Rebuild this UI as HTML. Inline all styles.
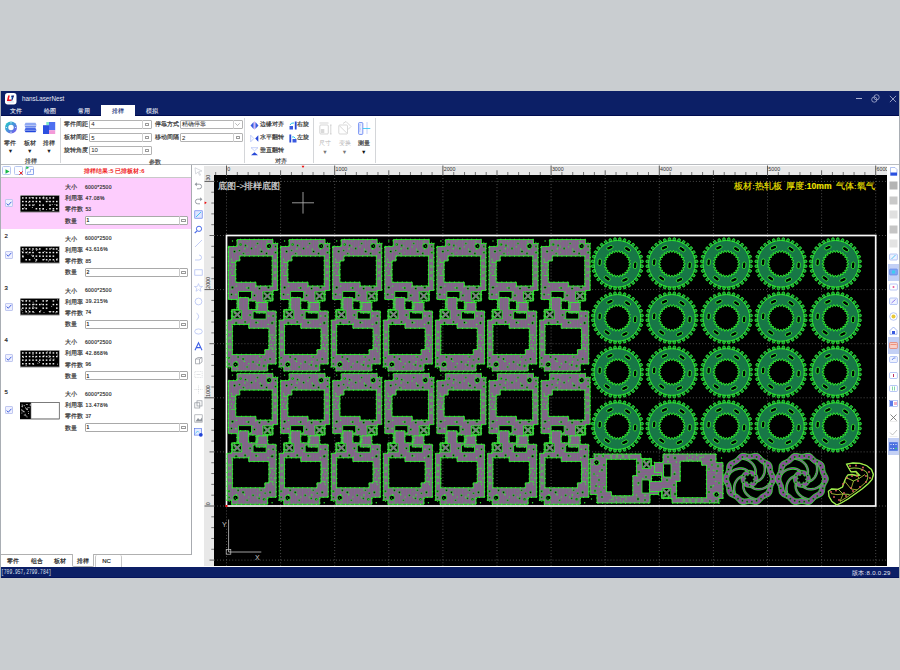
<!DOCTYPE html><html><head><meta charset="utf-8"><style>
*{margin:0;padding:0;box-sizing:border-box}
html,body{width:900px;height:670px;overflow:hidden;background:#c9cdd0;font-family:"Liberation Sans",sans-serif;position:relative}
.a{position:absolute}
.t{position:absolute;white-space:nowrap;line-height:1}
svg{position:absolute;overflow:visible}
</style></head><body>

<div class="a" style="left:0px;top:91px;width:900px;height:487.3px;background:#fff;border-left:1px solid #a9aeb4;border-right:1px solid #a9aeb4"></div>
<div class="a" style="left:1px;top:91px;width:898px;height:25px;background:#0c1f66;border-bottom:1px solid #000c50"></div>
<svg style="left:5px;top:92.8px" width="11.5" height="11.5" viewBox="0 0 11 11">
<rect x="0" y="0" width="11" height="11" rx="2.6" fill="#fff"/>
<path d="M3 2.4 L4.6 2.4 L3.7 6.2 L6.4 6.2 L6 7.6 L1.8 7.6 Z" fill="#ee1122"/>
<path d="M6.2 2.4 L8.8 2.4 L7 7.2 L5.9 7.2 L7 4 L5.8 4 Z" fill="#132a80"/>
<path d="M5.6 4.2 L6.8 4.2 L6.2 6 Z" fill="#3aaef0"/>
<path d="M2.2 8.6 H8.6" stroke="#7aa8e0" stroke-width="0.4"/>
</svg>
<div class="t" style="left:22px;top:95.95px;font-size:6.3px;color:#e6e9f2;">hansLaserNest</div>
<div class="a" style="left:856.2px;top:98.2px;width:5.6px;height:0.8px;background:#a9afd0"></div>
<svg style="left:871px;top:94px" width="9" height="9" viewBox="0 0 9 9" fill="none" stroke="#b4b9d8" stroke-width="0.75">
<circle cx="3.3" cy="5.6" r="2.6"/><circle cx="5.6" cy="3.3" r="2.6"/></svg>
<svg style="left:888.5px;top:94.5px" width="8" height="8" viewBox="0 0 9 9" stroke="#c9cde6" stroke-width="0.8">
<path d="M1 1 L8 8 M8 1 L1 8"/></svg>
<div class="a" style="left:101px;top:105px;width:34px;height:11px;background:#fff"></div>
<div class="t" style="left:-33.6px;width:100px;text-align:center;top:108.00px;font-size:6px;color:#e8ebf5;;-webkit-text-stroke:0.12px #e8ebf5">文件</div>
<div class="t" style="left:0.3999999999999986px;width:100px;text-align:center;top:108.00px;font-size:6px;color:#e8ebf5;;-webkit-text-stroke:0.12px #e8ebf5">绘图</div>
<div class="t" style="left:34px;width:100px;text-align:center;top:108.00px;font-size:6px;color:#e8ebf5;;-webkit-text-stroke:0.12px #e8ebf5">常用</div>
<div class="t" style="left:67.8px;width:100px;text-align:center;top:108.00px;font-size:6px;color:#1a2f78;;-webkit-text-stroke:0.12px #1a2f78">排样</div>
<div class="t" style="left:101.6px;width:100px;text-align:center;top:108.00px;font-size:6px;color:#e8ebf5;;-webkit-text-stroke:0.12px #e8ebf5">模拟</div>
<div class="a" style="left:1px;top:164px;width:898px;height:1.3px;background:#b9bcc0"></div>
<div class="a" style="left:59.5px;top:118px;width:1px;height:45px;background:#d4d6d9"></div>
<div class="a" style="left:243.5px;top:118px;width:1px;height:45px;background:#d4d6d9"></div>
<div class="a" style="left:312.5px;top:118px;width:1px;height:45px;background:#d4d6d9"></div>
<div class="a" style="left:374.5px;top:118px;width:1px;height:45px;background:#d4d6d9"></div>
<svg style="left:4px;top:121px" width="14" height="14" viewBox="0 0 14 14">
<defs><linearGradient id="g1" x1="0" y1="0" x2="1" y2="1"><stop offset="0" stop-color="#19d3c5"/><stop offset="1" stop-color="#7b4cf0"/></linearGradient></defs>
<circle cx="7" cy="6.5" r="6" fill="url(#g1)"/><circle cx="7" cy="6.5" r="2.7" fill="#fff"/>
<circle cx="7" cy="1.8" r="0.6" fill="#fff"/><circle cx="7" cy="11.2" r="0.6" fill="#fff"/><circle cx="2.3" cy="6.5" r="0.6" fill="#fff"/><circle cx="11.7" cy="6.5" r="0.6" fill="#fff"/>
</svg>
<svg style="left:23.5px;top:122px" width="13" height="11" viewBox="0 0 13 11">
<path d="M1.5 0.8 H11.5 L12.5 3 H0.5 Z" fill="#8fa8f2"/>
<path d="M0.5 3.5 H12.5 L11.5 5.8 H1.5 Z" fill="#6f8cec"/>
<path d="M1.5 6 H11.5 L12.5 8.2 H0.5 Z" fill="#4a6ae6"/>
<path d="M0.5 8.6 H12.5 L11.5 10.3 H1.5 Z" fill="#1f45dc"/>
</svg>
<svg style="left:43px;top:122px" width="13" height="12" viewBox="0 0 13 12">
<rect x="3.3" y="0" width="2.7" height="3.2" fill="#7de8c8"/>
<rect x="6" y="0" width="6.2" height="8.2" fill="#4e6ff0"/>
<rect x="0" y="3.2" width="6" height="8.8" fill="#2c4fdf"/>
<rect x="6" y="8.2" width="6.2" height="3.8" fill="#f39ad8"/>
</svg>
<div class="t" style="left:-39.6px;width:100px;text-align:center;top:139.60px;font-size:6px;color:#333;;-webkit-text-stroke:0.18px #333">零件</div>
<div class="t" style="left:-39.6px;width:100px;text-align:center;top:149.45px;font-size:5.5px;color:#222;">▼</div>
<div class="t" style="left:-20.4px;width:100px;text-align:center;top:139.60px;font-size:6px;color:#333;;-webkit-text-stroke:0.18px #333">板材</div>
<div class="t" style="left:-20.4px;width:100px;text-align:center;top:149.45px;font-size:5.5px;color:#222;">▼</div>
<div class="t" style="left:-1px;width:100px;text-align:center;top:139.60px;font-size:6px;color:#333;;-webkit-text-stroke:0.18px #333">排样</div>
<div class="t" style="left:-1px;width:100px;text-align:center;top:149.45px;font-size:5.5px;color:#222;">▼</div>
<div class="t" style="left:-19px;width:100px;text-align:center;top:158.20px;font-size:6px;color:#444;;-webkit-text-stroke:0.18px #444">排样</div>
<div class="t" style="left:104.69999999999999px;width:100px;text-align:center;top:158.50px;font-size:6px;color:#444;;-webkit-text-stroke:0.18px #444">参数</div>
<div class="t" style="left:231.3px;width:100px;text-align:center;top:158.20px;font-size:6px;color:#444;;-webkit-text-stroke:0.18px #444">对齐</div>
<div class="t" style="left:63.8px;top:121.75px;font-size:5.7px;color:#333;;-webkit-text-stroke:0.18px #333">零件间距</div>
<div class="a" style="left:89.2px;top:119.5px;width:63px;height:9px;background:#fff;border:1px solid #b3b3b3;border-radius:1px"></div>
<div class="t" style="left:91.2px;top:121.20px;font-size:6px;color:#222;">4</div>
<div class="a" style="left:142.2px;top:119.5px;width:1px;height:9px;background:#cfcfcf"></div>
<div class="a" style="left:145.2px;top:122.5px;width:4px;height:3px;border:0.6px solid #9a9a9a;border-radius:0.5px"></div>
<div class="t" style="left:63.8px;top:135.05px;font-size:5.7px;color:#333;;-webkit-text-stroke:0.18px #333">板材间距</div>
<div class="a" style="left:89.2px;top:132.8px;width:63px;height:9px;background:#fff;border:1px solid #b3b3b3;border-radius:1px"></div>
<div class="t" style="left:91.2px;top:134.50px;font-size:6px;color:#222;">5</div>
<div class="a" style="left:142.2px;top:132.8px;width:1px;height:9px;background:#cfcfcf"></div>
<div class="a" style="left:145.2px;top:135.8px;width:4px;height:3px;border:0.6px solid #9a9a9a;border-radius:0.5px"></div>
<div class="t" style="left:63.8px;top:147.95px;font-size:5.7px;color:#333;;-webkit-text-stroke:0.18px #333">旋转角度</div>
<div class="a" style="left:89.2px;top:145.7px;width:63px;height:9px;background:#fff;border:1px solid #b3b3b3;border-radius:1px"></div>
<div class="t" style="left:91.2px;top:147.40px;font-size:6px;color:#222;">10</div>
<div class="a" style="left:142.2px;top:145.7px;width:1px;height:9px;background:#cfcfcf"></div>
<div class="a" style="left:145.2px;top:148.7px;width:4px;height:3px;border:0.6px solid #9a9a9a;border-radius:0.5px"></div>
<div class="t" style="left:154.7px;top:121.75px;font-size:5.7px;color:#333;;-webkit-text-stroke:0.18px #333">停靠方式</div>
<div class="a" style="left:180px;top:119.5px;width:62.5px;height:9px;background:#fff;border:1px solid #b3b3b3;border-radius:1px"></div>
<div class="t" style="left:182px;top:121.20px;font-size:6px;color:#222;">精确停靠</div>
<div class="a" style="left:232.5px;top:119.5px;width:1px;height:9px;background:#cfcfcf"></div>
<svg style="left:235.0px;top:122.5px" width="5" height="3" viewBox="0 0 5 3"><path d="M0.3 0.3 L2.5 2.5 L4.7 0.3" fill="none" stroke="#888" stroke-width="0.6"/></svg>
<div class="t" style="left:154.7px;top:135.05px;font-size:5.7px;color:#333;;-webkit-text-stroke:0.18px #333">移动间隔</div>
<div class="a" style="left:180px;top:132.8px;width:62.5px;height:9px;background:#fff;border:1px solid #b3b3b3;border-radius:1px"></div>
<div class="t" style="left:182px;top:134.50px;font-size:6px;color:#222;">2</div>
<div class="a" style="left:232.5px;top:132.8px;width:1px;height:9px;background:#cfcfcf"></div>
<div class="a" style="left:235.5px;top:135.8px;width:4px;height:3px;border:0.6px solid #9a9a9a;border-radius:0.5px"></div>
<svg style="left:250px;top:120.5px" width="9" height="9" viewBox="0 0 9 9">
<path d="M3.6 1 L0.5 4.5 L3.6 8 Z" fill="#3b5be0"/><path d="M5.4 1 L8.5 4.5 L5.4 8 Z" fill="#3b5be0"/>
<rect x="4.2" y="0.5" width="0.6" height="8" fill="#c080f0"/></svg>
<div class="t" style="left:260px;top:121.85px;font-size:5.7px;color:#333;;-webkit-text-stroke:0.18px #333">边缘对齐</div>
<svg style="left:250px;top:134px" width="9" height="9" viewBox="0 0 9 9">
<path d="M0.7 1.2 L3.8 4.5 L0.7 7.8 Z" fill="none" stroke="#9fb3f5" stroke-width="0.6"/><path d="M8.3 1.2 L5.2 4.5 L8.3 7.8 Z" fill="#2849d8"/></svg>
<div class="t" style="left:260px;top:135.15px;font-size:5.7px;color:#333;;-webkit-text-stroke:0.18px #333">水平翻转</div>
<svg style="left:250px;top:147px" width="9" height="9" viewBox="0 0 9 9">
<path d="M1 0.7 L8 0.7 L4.5 3.8 Z" fill="none" stroke="#9fb3f5" stroke-width="0.6"/><path d="M1 8.3 L8 8.3 L4.5 5.2 Z" fill="#2849d8"/></svg>
<div class="t" style="left:260px;top:148.05px;font-size:5.7px;color:#333;;-webkit-text-stroke:0.18px #333">垂直翻转</div>
<svg style="left:288.5px;top:120.5px" width="8" height="9" viewBox="0 0 8 9">
<rect x="5.8" y="0.5" width="1.8" height="8" fill="#2849d8"/><path d="M0.5 8.5 L0.5 5 L4 5 L4 8.5 Z" fill="#3a5ae0"/><path d="M1 4 Q2 1.5 5 2" fill="none" stroke="#27c6f0" stroke-width="1"/></svg>
<div class="t" style="left:297.2px;top:121.85px;font-size:5.7px;color:#333;;-webkit-text-stroke:0.18px #333">右旋</div>
<svg style="left:288.5px;top:133.5px" width="8" height="9" viewBox="0 0 8 9">
<rect x="0.4" y="0.5" width="1.8" height="8" fill="#2849d8"/><path d="M3.5 8.5 L3.5 5 L7.5 5 L7.5 8.5 Z" fill="#3a5ae0"/><path d="M3 3 Q5 2 6.5 4.5" fill="none" stroke="#27c6f0" stroke-width="1"/></svg>
<div class="t" style="left:297.2px;top:135.15px;font-size:5.7px;color:#333;;-webkit-text-stroke:0.18px #333">左旋</div>
<svg style="left:318.5px;top:121.5px" width="13" height="13" viewBox="0 0 13 13" fill="none" stroke="#c4c4c4" stroke-width="0.7">
<path d="M0.5 1 H9.5"/><rect x="0.8" y="3" width="8.5" height="9" rx="1"/><rect x="1.8" y="7" width="3.5" height="4" fill="#dadada" stroke="none"/><path d="M11.8 3 V12 M11 3 H12.6 M11 12 H12.6"/></svg>
<svg style="left:338px;top:120.5px" width="14" height="14" viewBox="0 0 14 14" fill="none" stroke="#c8c8c8" stroke-width="0.7">
<rect x="0.8" y="4" width="8.7" height="9" rx="1"/><path d="M1.5 4.8 L9 12.3"/><path d="M5 2.5 L8 0.5 L13 5.5 L10 8.5"/></svg>
<svg style="left:358px;top:121.5px" width="13" height="13" viewBox="0 0 13 13">
<rect x="0.6" y="0.6" width="4.2" height="11.8" rx="0.8" fill="#eef2ff" stroke="#5878f0" stroke-width="0.8"/>
<path d="M1.2 3 H3 M1.2 5 H2.4 M1.2 7 H3 M1.2 9 H2.4" stroke="#5878f0" stroke-width="0.5"/>
<path d="M9 0.5 V12.5" stroke="#5878f0" stroke-width="0.7" stroke-dasharray="1 1"/>
<path d="M4.8 6.5 H12.3" stroke="#3ccaf0" stroke-width="0.9"/></svg>
<div class="t" style="left:275px;width:100px;text-align:center;top:139.90px;font-size:6px;color:#b5b5b5;">尺寸</div>
<div class="t" style="left:275px;width:100px;text-align:center;top:149.55px;font-size:5.5px;color:#777;">▼</div>
<div class="t" style="left:294.5px;width:100px;text-align:center;top:139.90px;font-size:6px;color:#b5b5b5;">变换</div>
<div class="t" style="left:294.5px;width:100px;text-align:center;top:149.55px;font-size:5.5px;color:#777;">▼</div>
<div class="t" style="left:313.8px;width:100px;text-align:center;top:139.90px;font-size:6px;color:#333;;-webkit-text-stroke:0.18px #333">测量</div>
<div class="t" style="left:313.8px;width:100px;text-align:center;top:149.55px;font-size:5.5px;color:#111;">▼</div>
<div class="a" style="left:191px;top:165px;width:1px;height:390px;background:#a8abb0"></div>
<div class="a" style="left:1px;top:176.6px;width:190px;height:0.8px;background:#c9c9c9"></div>
<div class="a" style="left:2px;top:166.4px;width:9px;height:9px;border:0.7px solid #b8c8f0;border-radius:1.5px;background:#fbfcff"></div>
<div class="a" style="left:13.5px;top:166.4px;width:9px;height:9px;border:0.7px solid #b8c8f0;border-radius:1.5px;background:#fbfcff"></div>
<div class="a" style="left:25px;top:166.4px;width:9px;height:9px;border:0.7px solid #b8c8f0;border-radius:1.5px;background:#fbfcff"></div>
<svg style="left:4.5px;top:168.8px" width="5" height="5" viewBox="0 0 5 5"><path d="M0.5 0.3 L4.6 2.5 L0.5 4.7 Z" fill="#18b848"/></svg>
<svg style="left:18.8px;top:171.2px" width="4" height="4" viewBox="0 0 4 4"><path d="M0.3 0.3 L3.7 3.7 M3.7 0.3 L0.3 3.7" stroke="#e81818" stroke-width="0.9"/></svg>
<svg style="left:26px;top:166px" width="3.5" height="3.5" viewBox="0 0 4 4"><path d="M0.3 0.3 L3.7 2 L0.3 3.7 Z" fill="#18b848"/></svg>
<svg style="left:26.5px;top:168.5px" width="7" height="6" viewBox="0 0 7 6" fill="none" stroke="#6d8fe8" stroke-width="0.6"><path d="M0.5 5.5 V3 H3.5 V0.5 H6.5 V5.5 Z"/></svg>
<div class="t" style="left:84px;top:168.70px;font-size:5.8px;color:#f01c1c;font-weight:bold;letter-spacing:0.05px">排样结果:5 已排板材:6</div>
<div class="a" style="left:1px;top:177.5px;width:190px;height:51.5px;background:#fdcdfd"></div>
<div class="a" style="left:5px;top:199.0px;width:8px;height:8px;background:#eef0ff;border:0.7px solid #c0c8f0;border-radius:1px"></div>
<svg style="left:6px;top:200.5px" width="6" height="5" viewBox="0 0 6 5"><path d="M0.6 2.6 L2.3 4.2 L5.4 0.8" fill="none" stroke="#3050d8" stroke-width="0.9"/></svg>
<div class="t" style="left:65px;top:184.00px;font-size:6px;color:#333;;-webkit-text-stroke:0.18px #333">大小</div>
<div class="t" style="left:85px;top:184.50px;font-size:5px;color:#333;letter-spacing:0.28px;-webkit-text-stroke:0.18px #333">6000*2500</div>
<div class="t" style="left:65px;top:195.20px;font-size:6px;color:#333;;-webkit-text-stroke:0.18px #333">利用率</div>
<div class="t" style="left:85.5px;top:195.70px;font-size:5px;color:#333;letter-spacing:0.4px;-webkit-text-stroke:0.18px #333">47.08%</div>
<div class="t" style="left:65px;top:206.30px;font-size:6px;color:#333;;-webkit-text-stroke:0.18px #333">零件数</div>
<div class="t" style="left:85.5px;top:206.80px;font-size:5px;color:#333;;-webkit-text-stroke:0.18px #333">53</div>
<div class="t" style="left:65px;top:217.70px;font-size:6px;color:#333;;-webkit-text-stroke:0.18px #333">数量</div>
<div class="a" style="left:84.5px;top:216.1px;width:103.5px;height:9px;background:#fff;border:0.8px solid #a9a9a9;border-radius:1px"></div>
<div class="t" style="left:86.5px;top:218.30px;font-size:5px;color:#222;;-webkit-text-stroke:0.18px #222">1</div>
<div class="a" style="left:178.5px;top:216.1px;width:0.8px;height:9px;background:#c8c8c8"></div>
<div class="a" style="left:181px;top:219.0px;width:4.5px;height:3.2px;border:0.6px solid #999;border-radius:0.5px"></div>
<div class="t" style="left:4.5px;top:233.45px;font-size:6px;color:#222;;-webkit-text-stroke:0.18px #222">2</div>
<div class="a" style="left:5px;top:250.75px;width:8px;height:8px;background:#eef0ff;border:0.7px solid #c0c8f0;border-radius:1px"></div>
<svg style="left:6px;top:252.25px" width="6" height="5" viewBox="0 0 6 5"><path d="M0.6 2.6 L2.3 4.2 L5.4 0.8" fill="none" stroke="#3050d8" stroke-width="0.9"/></svg>
<div class="t" style="left:65px;top:235.75px;font-size:6px;color:#333;;-webkit-text-stroke:0.18px #333">大小</div>
<div class="t" style="left:85px;top:236.25px;font-size:5px;color:#333;letter-spacing:0.28px;-webkit-text-stroke:0.18px #333">6000*2500</div>
<div class="t" style="left:65px;top:246.95px;font-size:6px;color:#333;;-webkit-text-stroke:0.18px #333">利用率</div>
<div class="t" style="left:85.5px;top:247.45px;font-size:5px;color:#333;letter-spacing:0.4px;-webkit-text-stroke:0.18px #333">43.616%</div>
<div class="t" style="left:65px;top:258.05px;font-size:6px;color:#333;;-webkit-text-stroke:0.18px #333">零件数</div>
<div class="t" style="left:85.5px;top:258.55px;font-size:5px;color:#333;;-webkit-text-stroke:0.18px #333">85</div>
<div class="t" style="left:65px;top:269.45px;font-size:6px;color:#333;;-webkit-text-stroke:0.18px #333">数量</div>
<div class="a" style="left:84.5px;top:267.85px;width:103.5px;height:9px;background:#fff;border:0.8px solid #a9a9a9;border-radius:1px"></div>
<div class="t" style="left:86.5px;top:270.05px;font-size:5px;color:#222;;-webkit-text-stroke:0.18px #222">2</div>
<div class="a" style="left:178.5px;top:267.85px;width:0.8px;height:9px;background:#c8c8c8"></div>
<div class="a" style="left:181px;top:270.75px;width:4.5px;height:3.2px;border:0.6px solid #999;border-radius:0.5px"></div>
<div class="t" style="left:4.5px;top:285.20px;font-size:6px;color:#222;;-webkit-text-stroke:0.18px #222">3</div>
<div class="a" style="left:5px;top:302.5px;width:8px;height:8px;background:#eef0ff;border:0.7px solid #c0c8f0;border-radius:1px"></div>
<svg style="left:6px;top:304.0px" width="6" height="5" viewBox="0 0 6 5"><path d="M0.6 2.6 L2.3 4.2 L5.4 0.8" fill="none" stroke="#3050d8" stroke-width="0.9"/></svg>
<div class="t" style="left:65px;top:287.50px;font-size:6px;color:#333;;-webkit-text-stroke:0.18px #333">大小</div>
<div class="t" style="left:85px;top:288.00px;font-size:5px;color:#333;letter-spacing:0.28px;-webkit-text-stroke:0.18px #333">6000*2500</div>
<div class="t" style="left:65px;top:298.70px;font-size:6px;color:#333;;-webkit-text-stroke:0.18px #333">利用率</div>
<div class="t" style="left:85.5px;top:299.20px;font-size:5px;color:#333;letter-spacing:0.4px;-webkit-text-stroke:0.18px #333">39.215%</div>
<div class="t" style="left:65px;top:309.80px;font-size:6px;color:#333;;-webkit-text-stroke:0.18px #333">零件数</div>
<div class="t" style="left:85.5px;top:310.30px;font-size:5px;color:#333;;-webkit-text-stroke:0.18px #333">74</div>
<div class="t" style="left:65px;top:321.20px;font-size:6px;color:#333;;-webkit-text-stroke:0.18px #333">数量</div>
<div class="a" style="left:84.5px;top:319.6px;width:103.5px;height:9px;background:#fff;border:0.8px solid #a9a9a9;border-radius:1px"></div>
<div class="t" style="left:86.5px;top:321.80px;font-size:5px;color:#222;;-webkit-text-stroke:0.18px #222">1</div>
<div class="a" style="left:178.5px;top:319.6px;width:0.8px;height:9px;background:#c8c8c8"></div>
<div class="a" style="left:181px;top:322.5px;width:4.5px;height:3.2px;border:0.6px solid #999;border-radius:0.5px"></div>
<div class="t" style="left:4.5px;top:336.95px;font-size:6px;color:#222;;-webkit-text-stroke:0.18px #222">4</div>
<div class="a" style="left:5px;top:354.25px;width:8px;height:8px;background:#eef0ff;border:0.7px solid #c0c8f0;border-radius:1px"></div>
<svg style="left:6px;top:355.75px" width="6" height="5" viewBox="0 0 6 5"><path d="M0.6 2.6 L2.3 4.2 L5.4 0.8" fill="none" stroke="#3050d8" stroke-width="0.9"/></svg>
<div class="t" style="left:65px;top:339.25px;font-size:6px;color:#333;;-webkit-text-stroke:0.18px #333">大小</div>
<div class="t" style="left:85px;top:339.75px;font-size:5px;color:#333;letter-spacing:0.28px;-webkit-text-stroke:0.18px #333">6000*2500</div>
<div class="t" style="left:65px;top:350.45px;font-size:6px;color:#333;;-webkit-text-stroke:0.18px #333">利用率</div>
<div class="t" style="left:85.5px;top:350.95px;font-size:5px;color:#333;letter-spacing:0.4px;-webkit-text-stroke:0.18px #333">42.868%</div>
<div class="t" style="left:65px;top:361.55px;font-size:6px;color:#333;;-webkit-text-stroke:0.18px #333">零件数</div>
<div class="t" style="left:85.5px;top:362.05px;font-size:5px;color:#333;;-webkit-text-stroke:0.18px #333">96</div>
<div class="t" style="left:65px;top:372.95px;font-size:6px;color:#333;;-webkit-text-stroke:0.18px #333">数量</div>
<div class="a" style="left:84.5px;top:371.35px;width:103.5px;height:9px;background:#fff;border:0.8px solid #a9a9a9;border-radius:1px"></div>
<div class="t" style="left:86.5px;top:373.55px;font-size:5px;color:#222;;-webkit-text-stroke:0.18px #222">1</div>
<div class="a" style="left:178.5px;top:371.35px;width:0.8px;height:9px;background:#c8c8c8"></div>
<div class="a" style="left:181px;top:374.25px;width:4.5px;height:3.2px;border:0.6px solid #999;border-radius:0.5px"></div>
<div class="t" style="left:4.5px;top:388.70px;font-size:6px;color:#222;;-webkit-text-stroke:0.18px #222">5</div>
<div class="a" style="left:5px;top:406.0px;width:8px;height:8px;background:#eef0ff;border:0.7px solid #c0c8f0;border-radius:1px"></div>
<svg style="left:6px;top:407.5px" width="6" height="5" viewBox="0 0 6 5"><path d="M0.6 2.6 L2.3 4.2 L5.4 0.8" fill="none" stroke="#3050d8" stroke-width="0.9"/></svg>
<div class="t" style="left:65px;top:391.00px;font-size:6px;color:#333;;-webkit-text-stroke:0.18px #333">大小</div>
<div class="t" style="left:85px;top:391.50px;font-size:5px;color:#333;letter-spacing:0.28px;-webkit-text-stroke:0.18px #333">6000*2500</div>
<div class="t" style="left:65px;top:402.20px;font-size:6px;color:#333;;-webkit-text-stroke:0.18px #333">利用率</div>
<div class="t" style="left:85.5px;top:402.70px;font-size:5px;color:#333;letter-spacing:0.4px;-webkit-text-stroke:0.18px #333">13.478%</div>
<div class="t" style="left:65px;top:413.30px;font-size:6px;color:#333;;-webkit-text-stroke:0.18px #333">零件数</div>
<div class="t" style="left:85.5px;top:413.80px;font-size:5px;color:#333;;-webkit-text-stroke:0.18px #333">37</div>
<div class="t" style="left:65px;top:424.70px;font-size:6px;color:#333;;-webkit-text-stroke:0.18px #333">数量</div>
<div class="a" style="left:84.5px;top:423.1px;width:103.5px;height:9px;background:#fff;border:0.8px solid #a9a9a9;border-radius:1px"></div>
<div class="t" style="left:86.5px;top:425.30px;font-size:5px;color:#222;;-webkit-text-stroke:0.18px #222">1</div>
<div class="a" style="left:178.5px;top:423.1px;width:0.8px;height:9px;background:#c8c8c8"></div>
<div class="a" style="left:181px;top:426.0px;width:4.5px;height:3.2px;border:0.6px solid #999;border-radius:0.5px"></div>
<svg style="left:20px;top:194.5px" width="39.5" height="17.5" viewBox="0 0 39.5 17"><rect x="0" y="0" width="39.5" height="17" fill="#000"/><rect x="2.0" y="2.0" width="1.6" height="1.4" fill="#f0f0f0"/><rect x="5.4" y="2.0" width="1.6" height="1.4" fill="#f0f0f0"/><rect x="8.8" y="2.0" width="1.6" height="1.4" fill="#f0f0f0"/><rect x="12.2" y="2.0" width="1.6" height="1.4" fill="#f0f0f0"/><rect x="15.6" y="2.0" width="1.6" height="1.4" fill="#f0f0f0"/><rect x="19.0" y="2.0" width="1.6" height="1.4" fill="#f0f0f0"/><rect x="22.4" y="2.0" width="1.6" height="1.4" fill="#f0f0f0"/><rect x="25.8" y="2.0" width="1.6" height="1.4" fill="#f0f0f0"/><rect x="29.2" y="2.0" width="1.6" height="1.4" fill="#f0f0f0"/><rect x="32.6" y="2.0" width="1.6" height="1.4" fill="#f0f0f0"/><rect x="2.0" y="5.6" width="1.6" height="1.4" fill="#f0f0f0"/><rect x="5.4" y="5.6" width="1.6" height="1.4" fill="#f0f0f0"/><rect x="8.8" y="5.6" width="1.6" height="1.4" fill="#f0f0f0"/><rect x="12.2" y="5.6" width="1.6" height="1.4" fill="#f0f0f0"/><rect x="15.6" y="5.6" width="1.6" height="1.4" fill="#f0f0f0"/><rect x="19.0" y="5.6" width="1.6" height="1.4" fill="#f0f0f0"/><rect x="25.8" y="5.6" width="1.6" height="1.4" fill="#f0f0f0"/><rect x="29.2" y="5.6" width="1.6" height="1.4" fill="#f0f0f0"/><rect x="32.6" y="5.6" width="1.6" height="1.4" fill="#f0f0f0"/><rect x="36.0" y="5.6" width="1.6" height="1.4" fill="#f0f0f0"/><rect x="2.0" y="9.2" width="1.6" height="1.4" fill="#f0f0f0"/><rect x="5.4" y="9.2" width="1.6" height="1.4" fill="#f0f0f0"/><rect x="8.8" y="9.2" width="1.6" height="1.4" fill="#f0f0f0"/><rect x="12.2" y="9.2" width="1.6" height="1.4" fill="#f0f0f0"/><rect x="19.0" y="9.2" width="1.6" height="1.4" fill="#f0f0f0"/><rect x="22.4" y="9.2" width="1.6" height="1.4" fill="#f0f0f0"/><rect x="29.2" y="9.2" width="1.6" height="1.4" fill="#f0f0f0"/><rect x="36.0" y="9.2" width="1.6" height="1.4" fill="#f0f0f0"/><rect x="2.0" y="12.8" width="1.6" height="1.4" fill="#f0f0f0"/><rect x="5.4" y="12.8" width="1.6" height="1.4" fill="#f0f0f0"/><rect x="15.6" y="12.8" width="1.6" height="1.4" fill="#f0f0f0"/><rect x="19.0" y="12.8" width="1.6" height="1.4" fill="#f0f0f0"/><rect x="22.4" y="12.8" width="1.6" height="1.4" fill="#f0f0f0"/><rect x="29.2" y="12.8" width="1.6" height="1.4" fill="#f0f0f0"/><rect x="32.6" y="12.8" width="1.6" height="1.4" fill="#f0f0f0"/><rect x="36.0" y="12.8" width="1.6" height="1.4" fill="#f0f0f0"/><rect x="19.8" y="6.4" width="0.8" height="0.8" fill="#fff"/><rect x="14.0" y="9.2" width="0.8" height="0.8" fill="#fff"/><rect x="22.6" y="13.7" width="0.8" height="0.8" fill="#fff"/><rect x="26.2" y="14.0" width="0.8" height="0.8" fill="#fff"/><rect x="32.7" y="14.9" width="0.8" height="0.8" fill="#fff"/><rect x="25.8" y="3.3" width="0.8" height="0.8" fill="#fff"/><rect x="32.8" y="14.5" width="0.8" height="0.8" fill="#fff"/><rect x="34.5" y="9.0" width="0.8" height="0.8" fill="#fff"/><rect x="27.4" y="4.0" width="0.8" height="0.8" fill="#fff"/><rect x="31.8" y="9.0" width="0.8" height="0.8" fill="#fff"/><rect x="11.5" y="1.9" width="0.8" height="0.8" fill="#fff"/><rect x="32.6" y="14.9" width="0.8" height="0.8" fill="#fff"/><rect x="4.3" y="12.2" width="0.8" height="0.8" fill="#fff"/><rect x="16.2" y="3.1" width="0.8" height="0.8" fill="#fff"/><rect x="11.9" y="11.8" width="0.8" height="0.8" fill="#fff"/><rect x="33.3" y="1.6" width="0.8" height="0.8" fill="#fff"/><rect x="23.7" y="1.6" width="0.8" height="0.8" fill="#fff"/><rect x="27.6" y="5.6" width="0.8" height="0.8" fill="#fff"/><rect x="33.6" y="14.7" width="0.8" height="0.8" fill="#fff"/><rect x="19.7" y="15.0" width="0.8" height="0.8" fill="#fff"/><rect x="12.5" y="2.1" width="0.8" height="0.8" fill="#fff"/><rect x="23.2" y="1.4" width="0.8" height="0.8" fill="#fff"/><rect x="8.3" y="6.7" width="0.8" height="0.8" fill="#fff"/><rect x="23.6" y="3.2" width="0.8" height="0.8" fill="#fff"/><rect x="2.6" y="13.1" width="0.8" height="0.8" fill="#fff"/><rect x="0.3" y="0.3" width="38.9" height="16.4" fill="none" stroke="#fff" stroke-width="0.4"/></svg>
<svg style="left:20px;top:246.25px" width="39.5" height="17.5" viewBox="0 0 39.5 17"><rect x="0" y="0" width="39.5" height="17" fill="#000"/><rect x="2.0" y="2.0" width="1.6" height="1.4" fill="#f0f0f0"/><rect x="5.4" y="2.0" width="1.6" height="1.4" fill="#f0f0f0"/><rect x="8.8" y="2.0" width="1.6" height="1.4" fill="#f0f0f0"/><rect x="12.2" y="2.0" width="1.6" height="1.4" fill="#f0f0f0"/><rect x="15.6" y="2.0" width="1.6" height="1.4" fill="#f0f0f0"/><rect x="19.0" y="2.0" width="1.6" height="1.4" fill="#f0f0f0"/><rect x="25.8" y="2.0" width="1.6" height="1.4" fill="#f0f0f0"/><rect x="29.2" y="2.0" width="1.6" height="1.4" fill="#f0f0f0"/><rect x="32.6" y="2.0" width="1.6" height="1.4" fill="#f0f0f0"/><rect x="36.0" y="2.0" width="1.6" height="1.4" fill="#f0f0f0"/><rect x="2.0" y="5.6" width="1.6" height="1.4" fill="#f0f0f0"/><rect x="5.4" y="5.6" width="1.6" height="1.4" fill="#f0f0f0"/><rect x="8.8" y="5.6" width="1.6" height="1.4" fill="#f0f0f0"/><rect x="12.2" y="5.6" width="1.6" height="1.4" fill="#f0f0f0"/><rect x="19.0" y="5.6" width="1.6" height="1.4" fill="#f0f0f0"/><rect x="22.4" y="5.6" width="1.6" height="1.4" fill="#f0f0f0"/><rect x="25.8" y="5.6" width="1.6" height="1.4" fill="#f0f0f0"/><rect x="29.2" y="5.6" width="1.6" height="1.4" fill="#f0f0f0"/><rect x="32.6" y="5.6" width="1.6" height="1.4" fill="#f0f0f0"/><rect x="36.0" y="5.6" width="1.6" height="1.4" fill="#f0f0f0"/><rect x="2.0" y="9.2" width="1.6" height="1.4" fill="#f0f0f0"/><rect x="12.2" y="9.2" width="1.6" height="1.4" fill="#f0f0f0"/><rect x="15.6" y="9.2" width="1.6" height="1.4" fill="#f0f0f0"/><rect x="19.0" y="9.2" width="1.6" height="1.4" fill="#f0f0f0"/><rect x="22.4" y="9.2" width="1.6" height="1.4" fill="#f0f0f0"/><rect x="25.8" y="9.2" width="1.6" height="1.4" fill="#f0f0f0"/><rect x="29.2" y="9.2" width="1.6" height="1.4" fill="#f0f0f0"/><rect x="32.6" y="9.2" width="1.6" height="1.4" fill="#f0f0f0"/><rect x="5.4" y="12.8" width="1.6" height="1.4" fill="#f0f0f0"/><rect x="8.8" y="12.8" width="1.6" height="1.4" fill="#f0f0f0"/><rect x="15.6" y="12.8" width="1.6" height="1.4" fill="#f0f0f0"/><rect x="22.4" y="12.8" width="1.6" height="1.4" fill="#f0f0f0"/><rect x="25.8" y="12.8" width="1.6" height="1.4" fill="#f0f0f0"/><rect x="29.2" y="12.8" width="1.6" height="1.4" fill="#f0f0f0"/><rect x="32.6" y="12.8" width="1.6" height="1.4" fill="#f0f0f0"/><rect x="36.0" y="12.8" width="1.6" height="1.4" fill="#f0f0f0"/><rect x="7.0" y="5.3" width="0.8" height="0.8" fill="#fff"/><rect x="31.1" y="1.6" width="0.8" height="0.8" fill="#fff"/><rect x="2.7" y="9.8" width="0.8" height="0.8" fill="#fff"/><rect x="11.4" y="8.5" width="0.8" height="0.8" fill="#fff"/><rect x="18.4" y="5.8" width="0.8" height="0.8" fill="#fff"/><rect x="37.9" y="3.7" width="0.8" height="0.8" fill="#fff"/><rect x="16.3" y="3.8" width="0.8" height="0.8" fill="#fff"/><rect x="24.4" y="4.9" width="0.8" height="0.8" fill="#fff"/><rect x="14.2" y="11.5" width="0.8" height="0.8" fill="#fff"/><rect x="12.9" y="8.8" width="0.8" height="0.8" fill="#fff"/><rect x="34.5" y="2.4" width="0.8" height="0.8" fill="#fff"/><rect x="3.3" y="4.2" width="0.8" height="0.8" fill="#fff"/><rect x="29.3" y="9.6" width="0.8" height="0.8" fill="#fff"/><rect x="9.8" y="5.6" width="0.8" height="0.8" fill="#fff"/><rect x="7.6" y="7.4" width="0.8" height="0.8" fill="#fff"/><rect x="2.6" y="10.8" width="0.8" height="0.8" fill="#fff"/><rect x="34.1" y="14.4" width="0.8" height="0.8" fill="#fff"/><rect x="28.2" y="14.4" width="0.8" height="0.8" fill="#fff"/><rect x="1.7" y="5.0" width="0.8" height="0.8" fill="#fff"/><rect x="36.7" y="11.9" width="0.8" height="0.8" fill="#fff"/><rect x="16.2" y="14.2" width="0.8" height="0.8" fill="#fff"/><rect x="24.0" y="12.5" width="0.8" height="0.8" fill="#fff"/><rect x="11.9" y="3.7" width="0.8" height="0.8" fill="#fff"/><rect x="17.4" y="2.9" width="0.8" height="0.8" fill="#fff"/><rect x="15.1" y="14.5" width="0.8" height="0.8" fill="#fff"/><rect x="0.3" y="0.3" width="38.9" height="16.4" fill="none" stroke="#fff" stroke-width="0.4"/></svg>
<svg style="left:20px;top:298.0px" width="39.5" height="17.5" viewBox="0 0 39.5 17"><rect x="0" y="0" width="39.5" height="17" fill="#000"/><rect x="2.0" y="2.0" width="1.6" height="1.4" fill="#f0f0f0"/><rect x="5.4" y="2.0" width="1.6" height="1.4" fill="#f0f0f0"/><rect x="8.8" y="2.0" width="1.6" height="1.4" fill="#f0f0f0"/><rect x="15.6" y="2.0" width="1.6" height="1.4" fill="#f0f0f0"/><rect x="22.4" y="2.0" width="1.6" height="1.4" fill="#f0f0f0"/><rect x="25.8" y="2.0" width="1.6" height="1.4" fill="#f0f0f0"/><rect x="32.6" y="2.0" width="1.6" height="1.4" fill="#f0f0f0"/><rect x="2.0" y="5.6" width="1.6" height="1.4" fill="#f0f0f0"/><rect x="5.4" y="5.6" width="1.6" height="1.4" fill="#f0f0f0"/><rect x="8.8" y="5.6" width="1.6" height="1.4" fill="#f0f0f0"/><rect x="12.2" y="5.6" width="1.6" height="1.4" fill="#f0f0f0"/><rect x="15.6" y="5.6" width="1.6" height="1.4" fill="#f0f0f0"/><rect x="19.0" y="5.6" width="1.6" height="1.4" fill="#f0f0f0"/><rect x="22.4" y="5.6" width="1.6" height="1.4" fill="#f0f0f0"/><rect x="25.8" y="5.6" width="1.6" height="1.4" fill="#f0f0f0"/><rect x="32.6" y="5.6" width="1.6" height="1.4" fill="#f0f0f0"/><rect x="36.0" y="5.6" width="1.6" height="1.4" fill="#f0f0f0"/><rect x="2.0" y="9.2" width="1.6" height="1.4" fill="#f0f0f0"/><rect x="5.4" y="9.2" width="1.6" height="1.4" fill="#f0f0f0"/><rect x="8.8" y="9.2" width="1.6" height="1.4" fill="#f0f0f0"/><rect x="12.2" y="9.2" width="1.6" height="1.4" fill="#f0f0f0"/><rect x="15.6" y="9.2" width="1.6" height="1.4" fill="#f0f0f0"/><rect x="22.4" y="9.2" width="1.6" height="1.4" fill="#f0f0f0"/><rect x="25.8" y="9.2" width="1.6" height="1.4" fill="#f0f0f0"/><rect x="36.0" y="9.2" width="1.6" height="1.4" fill="#f0f0f0"/><rect x="5.4" y="12.8" width="1.6" height="1.4" fill="#f0f0f0"/><rect x="8.8" y="12.8" width="1.6" height="1.4" fill="#f0f0f0"/><rect x="12.2" y="12.8" width="1.6" height="1.4" fill="#f0f0f0"/><rect x="19.0" y="12.8" width="1.6" height="1.4" fill="#f0f0f0"/><rect x="29.2" y="12.8" width="1.6" height="1.4" fill="#f0f0f0"/><rect x="32.6" y="12.8" width="1.6" height="1.4" fill="#f0f0f0"/><rect x="36.0" y="12.8" width="1.6" height="1.4" fill="#f0f0f0"/><rect x="6.4" y="1.9" width="0.8" height="0.8" fill="#fff"/><rect x="12.2" y="9.4" width="0.8" height="0.8" fill="#fff"/><rect x="1.1" y="10.5" width="0.8" height="0.8" fill="#fff"/><rect x="13.5" y="5.3" width="0.8" height="0.8" fill="#fff"/><rect x="31.3" y="7.7" width="0.8" height="0.8" fill="#fff"/><rect x="12.7" y="7.7" width="0.8" height="0.8" fill="#fff"/><rect x="27.1" y="1.8" width="0.8" height="0.8" fill="#fff"/><rect x="37.1" y="1.3" width="0.8" height="0.8" fill="#fff"/><rect x="28.7" y="12.8" width="0.8" height="0.8" fill="#fff"/><rect x="1.7" y="12.0" width="0.8" height="0.8" fill="#fff"/><rect x="14.5" y="9.1" width="0.8" height="0.8" fill="#fff"/><rect x="1.3" y="1.7" width="0.8" height="0.8" fill="#fff"/><rect x="7.7" y="14.4" width="0.8" height="0.8" fill="#fff"/><rect x="8.3" y="11.6" width="0.8" height="0.8" fill="#fff"/><rect x="35.4" y="14.2" width="0.8" height="0.8" fill="#fff"/><rect x="13.7" y="6.0" width="0.8" height="0.8" fill="#fff"/><rect x="20.4" y="11.9" width="0.8" height="0.8" fill="#fff"/><rect x="5.0" y="11.5" width="0.8" height="0.8" fill="#fff"/><rect x="30.5" y="13.0" width="0.8" height="0.8" fill="#fff"/><rect x="2.4" y="14.2" width="0.8" height="0.8" fill="#fff"/><rect x="4.4" y="5.8" width="0.8" height="0.8" fill="#fff"/><rect x="23.6" y="13.9" width="0.8" height="0.8" fill="#fff"/><rect x="13.6" y="13.9" width="0.8" height="0.8" fill="#fff"/><rect x="21.2" y="5.4" width="0.8" height="0.8" fill="#fff"/><rect x="12.7" y="3.5" width="0.8" height="0.8" fill="#fff"/><rect x="0.3" y="0.3" width="38.9" height="16.4" fill="none" stroke="#fff" stroke-width="0.4"/></svg>
<svg style="left:20px;top:349.75px" width="39.5" height="17.5" viewBox="0 0 39.5 17"><rect x="0" y="0" width="39.5" height="17" fill="#000"/><rect x="2.0" y="2.0" width="1.6" height="1.4" fill="#f0f0f0"/><rect x="5.4" y="2.0" width="1.6" height="1.4" fill="#f0f0f0"/><rect x="8.8" y="2.0" width="1.6" height="1.4" fill="#f0f0f0"/><rect x="12.2" y="2.0" width="1.6" height="1.4" fill="#f0f0f0"/><rect x="15.6" y="2.0" width="1.6" height="1.4" fill="#f0f0f0"/><rect x="19.0" y="2.0" width="1.6" height="1.4" fill="#f0f0f0"/><rect x="22.4" y="2.0" width="1.6" height="1.4" fill="#f0f0f0"/><rect x="25.8" y="2.0" width="1.6" height="1.4" fill="#f0f0f0"/><rect x="29.2" y="2.0" width="1.6" height="1.4" fill="#f0f0f0"/><rect x="32.6" y="2.0" width="1.6" height="1.4" fill="#f0f0f0"/><rect x="36.0" y="2.0" width="1.6" height="1.4" fill="#f0f0f0"/><rect x="2.0" y="5.6" width="1.6" height="1.4" fill="#f0f0f0"/><rect x="5.4" y="5.6" width="1.6" height="1.4" fill="#f0f0f0"/><rect x="8.8" y="5.6" width="1.6" height="1.4" fill="#f0f0f0"/><rect x="12.2" y="5.6" width="1.6" height="1.4" fill="#f0f0f0"/><rect x="15.6" y="5.6" width="1.6" height="1.4" fill="#f0f0f0"/><rect x="19.0" y="5.6" width="1.6" height="1.4" fill="#f0f0f0"/><rect x="22.4" y="5.6" width="1.6" height="1.4" fill="#f0f0f0"/><rect x="25.8" y="5.6" width="1.6" height="1.4" fill="#f0f0f0"/><rect x="29.2" y="5.6" width="1.6" height="1.4" fill="#f0f0f0"/><rect x="32.6" y="5.6" width="1.6" height="1.4" fill="#f0f0f0"/><rect x="36.0" y="5.6" width="1.6" height="1.4" fill="#f0f0f0"/><rect x="2.0" y="9.2" width="1.6" height="1.4" fill="#f0f0f0"/><rect x="5.4" y="9.2" width="1.6" height="1.4" fill="#f0f0f0"/><rect x="8.8" y="9.2" width="1.6" height="1.4" fill="#f0f0f0"/><rect x="12.2" y="9.2" width="1.6" height="1.4" fill="#f0f0f0"/><rect x="15.6" y="9.2" width="1.6" height="1.4" fill="#f0f0f0"/><rect x="19.0" y="9.2" width="1.6" height="1.4" fill="#f0f0f0"/><rect x="22.4" y="9.2" width="1.6" height="1.4" fill="#f0f0f0"/><rect x="25.8" y="9.2" width="1.6" height="1.4" fill="#f0f0f0"/><rect x="29.2" y="9.2" width="1.6" height="1.4" fill="#f0f0f0"/><rect x="32.6" y="9.2" width="1.6" height="1.4" fill="#f0f0f0"/><rect x="2.0" y="12.8" width="1.6" height="1.4" fill="#f0f0f0"/><rect x="5.4" y="12.8" width="1.6" height="1.4" fill="#f0f0f0"/><rect x="8.8" y="12.8" width="1.6" height="1.4" fill="#f0f0f0"/><rect x="12.2" y="12.8" width="1.6" height="1.4" fill="#f0f0f0"/><rect x="22.4" y="12.8" width="1.6" height="1.4" fill="#f0f0f0"/><rect x="25.8" y="12.8" width="1.6" height="1.4" fill="#f0f0f0"/><rect x="29.2" y="12.8" width="1.6" height="1.4" fill="#f0f0f0"/><rect x="32.6" y="12.8" width="1.6" height="1.4" fill="#f0f0f0"/><rect x="2.1" y="6.1" width="0.8" height="0.8" fill="#fff"/><rect x="23.3" y="5.3" width="0.8" height="0.8" fill="#fff"/><rect x="22.8" y="2.3" width="0.8" height="0.8" fill="#fff"/><rect x="33.6" y="8.4" width="0.8" height="0.8" fill="#fff"/><rect x="5.3" y="10.3" width="0.8" height="0.8" fill="#fff"/><rect x="12.6" y="3.7" width="0.8" height="0.8" fill="#fff"/><rect x="18.9" y="2.9" width="0.8" height="0.8" fill="#fff"/><rect x="8.8" y="13.1" width="0.8" height="0.8" fill="#fff"/><rect x="26.8" y="1.2" width="0.8" height="0.8" fill="#fff"/><rect x="29.8" y="1.2" width="0.8" height="0.8" fill="#fff"/><rect x="13.3" y="13.7" width="0.8" height="0.8" fill="#fff"/><rect x="23.9" y="5.3" width="0.8" height="0.8" fill="#fff"/><rect x="15.0" y="6.4" width="0.8" height="0.8" fill="#fff"/><rect x="5.7" y="15.0" width="0.8" height="0.8" fill="#fff"/><rect x="3.0" y="6.9" width="0.8" height="0.8" fill="#fff"/><rect x="28.6" y="6.6" width="0.8" height="0.8" fill="#fff"/><rect x="37.3" y="4.4" width="0.8" height="0.8" fill="#fff"/><rect x="37.2" y="13.5" width="0.8" height="0.8" fill="#fff"/><rect x="25.8" y="13.5" width="0.8" height="0.8" fill="#fff"/><rect x="17.5" y="12.6" width="0.8" height="0.8" fill="#fff"/><rect x="30.5" y="8.2" width="0.8" height="0.8" fill="#fff"/><rect x="18.4" y="10.9" width="0.8" height="0.8" fill="#fff"/><rect x="16.1" y="2.2" width="0.8" height="0.8" fill="#fff"/><rect x="28.6" y="4.7" width="0.8" height="0.8" fill="#fff"/><rect x="19.0" y="12.0" width="0.8" height="0.8" fill="#fff"/><rect x="0.3" y="0.3" width="38.9" height="16.4" fill="none" stroke="#fff" stroke-width="0.4"/></svg>
<svg style="left:20px;top:401.5px" width="39.5" height="17.5" viewBox="0 0 39.5 17"><rect x="0" y="0" width="39.5" height="17" fill="#000"/><rect x="11" y="0.4" width="28.2" height="16.2" fill="#fff" stroke="#777" stroke-width="0.6"/><rect x="3.9" y="3.1" width="0.9" height="0.8" fill="#ddd"/><rect x="6.9" y="2.0" width="0.9" height="0.8" fill="#ddd"/><rect x="5.8" y="6.1" width="0.9" height="0.8" fill="#ddd"/><rect x="1.5" y="8.1" width="0.9" height="0.8" fill="#ddd"/><rect x="1.3" y="7.1" width="0.9" height="0.8" fill="#ddd"/><rect x="1.6" y="2.3" width="0.9" height="0.8" fill="#ddd"/><rect x="4.8" y="12.6" width="0.9" height="0.8" fill="#ddd"/><rect x="2.1" y="4.1" width="0.9" height="0.8" fill="#ddd"/><rect x="6.6" y="14.3" width="0.9" height="0.8" fill="#ddd"/><rect x="6.2" y="6.6" width="0.9" height="0.8" fill="#ddd"/><rect x="9.8" y="1.7" width="0.9" height="0.8" fill="#ddd"/><rect x="8.7" y="5.1" width="0.9" height="0.8" fill="#ddd"/><rect x="2.3" y="2.6" width="0.9" height="0.8" fill="#ddd"/><rect x="3.8" y="12.4" width="0.9" height="0.8" fill="#ddd"/><rect x="2.6" y="9.1" width="0.9" height="0.8" fill="#ddd"/><rect x="6.8" y="6.2" width="0.9" height="0.8" fill="#ddd"/><rect x="5.9" y="1.9" width="0.9" height="0.8" fill="#ddd"/><rect x="1.5" y="3.9" width="0.9" height="0.8" fill="#ddd"/><rect x="7.1" y="7.0" width="0.9" height="0.8" fill="#ddd"/><rect x="3.8" y="9.2" width="0.9" height="0.8" fill="#ddd"/><rect x="5.1" y="5.2" width="0.9" height="0.8" fill="#ddd"/><rect x="8.1" y="10.8" width="0.9" height="0.8" fill="#ddd"/><rect x="3.2" y="9.0" width="0.9" height="0.8" fill="#ddd"/><rect x="5.7" y="13.3" width="0.9" height="0.8" fill="#ddd"/><rect x="7.6" y="5.0" width="0.9" height="0.8" fill="#ddd"/><rect x="9.8" y="2.7" width="0.9" height="0.8" fill="#ddd"/><rect x="4.8" y="11.6" width="0.9" height="0.8" fill="#ddd"/><rect x="2.4" y="7.8" width="0.9" height="0.8" fill="#ddd"/><rect x="1.4" y="10.4" width="0.9" height="0.8" fill="#ddd"/><rect x="7.9" y="9.0" width="0.9" height="0.8" fill="#ddd"/></svg>
<div class="a" style="left:1px;top:554px;width:190px;height:0.8px;background:#b0b0b0"></div>
<div class="a" style="left:72px;top:553.5px;width:22px;height:13px;background:#fff;border:0.8px solid #b6b6b6;border-top:none;border-radius:0 0 2px 2px"></div>
<div class="a" style="left:95px;top:554.5px;width:27px;height:12px;border-left:0.8px solid #c6c6c6;border-right:0.8px solid #c6c6c6;border-radius:2px 2px 0 0"></div>
<div class="t" style="left:-37.5px;width:100px;text-align:center;top:557.60px;font-size:6px;color:#222;;-webkit-text-stroke:0.18px #222">零件</div>
<div class="t" style="left:-13.5px;width:100px;text-align:center;top:557.60px;font-size:6px;color:#222;;-webkit-text-stroke:0.18px #222">组合</div>
<div class="t" style="left:10px;width:100px;text-align:center;top:557.60px;font-size:6px;color:#222;;-webkit-text-stroke:0.18px #222">板材</div>
<div class="t" style="left:33px;width:100px;text-align:center;top:557.60px;font-size:6px;color:#222;;-webkit-text-stroke:0.18px #222">排样</div>
<div class="t" style="left:56.5px;width:100px;text-align:center;top:557.60px;font-size:6px;color:#222;;-webkit-text-stroke:0.18px #222">NC</div>
<svg style="left:193.5px;top:166.5px" width="9" height="9" viewBox="0 0 9 9"><path d="M1 0.8 L8 4 L4.8 4.6 L6.5 8 L5.6 8.4 L4 5 L1.7 7 Z" fill="none" stroke="#c9ccd2" stroke-width="0.7"/></svg>
<svg style="left:193.5px;top:180.5px" width="9" height="9" viewBox="0 0 9 9"><path d="M2 3.2 H5.3 A2.3 2.3 0 0 1 5.3 7.8 H3" fill="none" stroke="#8f949c" stroke-width="0.9"/><path d="M0.6 3.2 L2.8 1.2 L2.8 5.2 Z" fill="#8f949c"/></svg>
<svg style="left:193.5px;top:195.5px" width="9" height="9" viewBox="0 0 9 9"><path d="M7 3.2 H3.7 A2.3 2.3 0 0 0 3.7 7.8 H6" fill="none" stroke="#8f949c" stroke-width="0.9"/><path d="M8.4 3.2 L6.2 1.2 L6.2 5.2 Z" fill="#8f949c"/></svg>
<svg style="left:193.5px;top:209.9px" width="9" height="9" viewBox="0 0 9 9"><rect x="0.8" y="0.8" width="7.4" height="7.4" fill="#dfe7ff" stroke="#4a6be8" stroke-width="0.6"/><path d="M2 7 L7 2" stroke="#33bbee" stroke-width="0.9"/></svg>
<svg style="left:193.5px;top:225.0px" width="9" height="9" viewBox="0 0 9 9"><circle cx="5" cy="3.8" r="2.6" fill="none" stroke="#4a6be8" stroke-width="1"/><path d="M3 5.8 L0.7 8.2" stroke="#4a6be8" stroke-width="1.2"/></svg>
<svg style="left:193.5px;top:239.1px" width="9" height="9" viewBox="0 0 9 9"><path d="M1 8 L8 1" stroke="#a9b9f2" stroke-width="0.7"/></svg>
<svg style="left:193.5px;top:253.2px" width="9" height="9" viewBox="0 0 9 9"><path d="M1 7 H5 A2.5 2.5 0 0 0 5 2" fill="none" stroke="#a9b9f2" stroke-width="0.7"/></svg>
<svg style="left:193.5px;top:268.4px" width="9" height="9" viewBox="0 0 9 9"><rect x="0.8" y="1.8" width="7.4" height="5.4" fill="none" stroke="#a9b9f2" stroke-width="0.7"/></svg>
<svg style="left:193.5px;top:282.5px" width="9" height="9" viewBox="0 0 9 9"><path d="M4.5 0.6 L5.6 3.4 L8.5 3.5 L6.2 5.3 L7 8.3 L4.5 6.6 L2 8.3 L2.8 5.3 L0.5 3.5 L3.4 3.4 Z" fill="none" stroke="#a9b9f2" stroke-width="0.6"/></svg>
<svg style="left:193.5px;top:297.0px" width="9" height="9" viewBox="0 0 9 9"><circle cx="4.5" cy="4.5" r="3.4" fill="none" stroke="#a9b9f2" stroke-width="0.7"/></svg>
<svg style="left:193.5px;top:311.5px" width="9" height="9" viewBox="0 0 9 9"><path d="M2.5 1.2 A3.6 3.6 0 0 1 2.5 7.8" fill="none" stroke="#a9b9f2" stroke-width="0.7"/></svg>
<svg style="left:193.5px;top:326.5px" width="9" height="9" viewBox="0 0 9 9"><ellipse cx="4.5" cy="4.5" rx="3.8" ry="2.6" fill="none" stroke="#a9b9f2" stroke-width="0.7"/></svg>
<svg style="left:193.5px;top:342.1px" width="9" height="9" viewBox="0 0 9 9"><path d="M1 8.3 L4.5 0.8 L8 8.3 M2.4 5.6 H6.6" fill="none" stroke="#3d5fe6" stroke-width="1.1"/></svg>
<svg style="left:193.5px;top:355.9px" width="9" height="9" viewBox="0 0 9 9"><path d="M1.5 3 L4 1.5 H8 V6 L5.5 7.8 H1.5 Z M1.5 3 H5.5 V7.8 M5.5 3 L8 1.5" fill="none" stroke="#8f949c" stroke-width="0.7"/></svg>
<svg style="left:193.5px;top:370.2px" width="9" height="9" viewBox="0 0 9 9"><rect x="0.8" y="1.5" width="7.4" height="6" fill="none" stroke="#c9ccd2" stroke-width="0.6" stroke-dasharray="1 0.8"/><path d="M2.5 4.5 H6.5" stroke="#c9ccd2" stroke-width="0.6"/></svg>
<svg style="left:193.5px;top:384.5px" width="9" height="9" viewBox="0 0 9 9"><path d="M4.5 0.5 V8.5 M0.5 4.5 H8.5" stroke="#c9ccd2" stroke-width="0.6" stroke-dasharray="1 0.8"/></svg>
<svg style="left:193.5px;top:399.5px" width="9" height="9" viewBox="0 0 9 9"><rect x="0.8" y="2.8" width="5" height="5.2" fill="none" stroke="#8f949c" stroke-width="0.7"/><rect x="3" y="0.8" width="5" height="5.2" fill="none" stroke="#8f949c" stroke-width="0.7"/></svg>
<svg style="left:193.5px;top:413.9px" width="9" height="9" viewBox="0 0 9 9"><rect x="0.8" y="0.8" width="7.4" height="7.4" fill="none" stroke="#8f949c" stroke-width="0.6"/><path d="M1.5 7.5 L4 4 L6 6 L8 3.5 V7.5 Z" fill="#8f949c"/></svg>
<svg style="left:193.5px;top:428.2px" width="9" height="9" viewBox="0 0 9 9"><rect x="0.6" y="0.6" width="7" height="6.5" fill="#e5ecff" stroke="#4a6be8" stroke-width="0.6"/><circle cx="6.8" cy="6.8" r="1.9" fill="#2143d6"/><path d="M1.5 5.5 L3.5 3 L5 4.5" fill="none" stroke="#36c0f0" stroke-width="0.7"/></svg>
<div class="a" style="left:204px;top:165.5px;width:683px;height:9.6px;background:#e8e8e8"></div>
<div class="a" style="left:204px;top:165.5px;width:10px;height:400.5px;background:#e8e8e8"></div>
<svg style="left:0;top:0" width="900" height="670" viewBox="0 0 900 670"><line x1="215.68" y1="172" x2="215.68" y2="175" stroke="#555" stroke-width="0.8"/><line x1="226.50" y1="165.5" x2="226.50" y2="175" stroke="#333" stroke-width="0.8"/><line x1="237.32" y1="172" x2="237.32" y2="175" stroke="#555" stroke-width="0.8"/><line x1="248.14" y1="172" x2="248.14" y2="175" stroke="#555" stroke-width="0.8"/><line x1="258.96" y1="172" x2="258.96" y2="175" stroke="#555" stroke-width="0.8"/><line x1="269.78" y1="172" x2="269.78" y2="175" stroke="#555" stroke-width="0.8"/><line x1="280.60" y1="170.3" x2="280.60" y2="175" stroke="#444" stroke-width="0.8"/><line x1="291.42" y1="172" x2="291.42" y2="175" stroke="#555" stroke-width="0.8"/><line x1="302.24" y1="172" x2="302.24" y2="175" stroke="#555" stroke-width="0.8"/><line x1="313.06" y1="172" x2="313.06" y2="175" stroke="#555" stroke-width="0.8"/><line x1="323.88" y1="172" x2="323.88" y2="175" stroke="#555" stroke-width="0.8"/><line x1="334.70" y1="165.5" x2="334.70" y2="175" stroke="#333" stroke-width="0.8"/><line x1="345.52" y1="172" x2="345.52" y2="175" stroke="#555" stroke-width="0.8"/><line x1="356.34" y1="172" x2="356.34" y2="175" stroke="#555" stroke-width="0.8"/><line x1="367.16" y1="172" x2="367.16" y2="175" stroke="#555" stroke-width="0.8"/><line x1="377.98" y1="172" x2="377.98" y2="175" stroke="#555" stroke-width="0.8"/><line x1="388.80" y1="170.3" x2="388.80" y2="175" stroke="#444" stroke-width="0.8"/><line x1="399.62" y1="172" x2="399.62" y2="175" stroke="#555" stroke-width="0.8"/><line x1="410.44" y1="172" x2="410.44" y2="175" stroke="#555" stroke-width="0.8"/><line x1="421.26" y1="172" x2="421.26" y2="175" stroke="#555" stroke-width="0.8"/><line x1="432.08" y1="172" x2="432.08" y2="175" stroke="#555" stroke-width="0.8"/><line x1="442.90" y1="165.5" x2="442.90" y2="175" stroke="#333" stroke-width="0.8"/><line x1="453.72" y1="172" x2="453.72" y2="175" stroke="#555" stroke-width="0.8"/><line x1="464.54" y1="172" x2="464.54" y2="175" stroke="#555" stroke-width="0.8"/><line x1="475.36" y1="172" x2="475.36" y2="175" stroke="#555" stroke-width="0.8"/><line x1="486.18" y1="172" x2="486.18" y2="175" stroke="#555" stroke-width="0.8"/><line x1="497.00" y1="170.3" x2="497.00" y2="175" stroke="#444" stroke-width="0.8"/><line x1="507.82" y1="172" x2="507.82" y2="175" stroke="#555" stroke-width="0.8"/><line x1="518.64" y1="172" x2="518.64" y2="175" stroke="#555" stroke-width="0.8"/><line x1="529.46" y1="172" x2="529.46" y2="175" stroke="#555" stroke-width="0.8"/><line x1="540.28" y1="172" x2="540.28" y2="175" stroke="#555" stroke-width="0.8"/><line x1="551.10" y1="165.5" x2="551.10" y2="175" stroke="#333" stroke-width="0.8"/><line x1="561.92" y1="172" x2="561.92" y2="175" stroke="#555" stroke-width="0.8"/><line x1="572.74" y1="172" x2="572.74" y2="175" stroke="#555" stroke-width="0.8"/><line x1="583.56" y1="172" x2="583.56" y2="175" stroke="#555" stroke-width="0.8"/><line x1="594.38" y1="172" x2="594.38" y2="175" stroke="#555" stroke-width="0.8"/><line x1="605.20" y1="170.3" x2="605.20" y2="175" stroke="#444" stroke-width="0.8"/><line x1="616.02" y1="172" x2="616.02" y2="175" stroke="#555" stroke-width="0.8"/><line x1="626.84" y1="172" x2="626.84" y2="175" stroke="#555" stroke-width="0.8"/><line x1="637.66" y1="172" x2="637.66" y2="175" stroke="#555" stroke-width="0.8"/><line x1="648.48" y1="172" x2="648.48" y2="175" stroke="#555" stroke-width="0.8"/><line x1="659.30" y1="165.5" x2="659.30" y2="175" stroke="#333" stroke-width="0.8"/><line x1="670.12" y1="172" x2="670.12" y2="175" stroke="#555" stroke-width="0.8"/><line x1="680.94" y1="172" x2="680.94" y2="175" stroke="#555" stroke-width="0.8"/><line x1="691.76" y1="172" x2="691.76" y2="175" stroke="#555" stroke-width="0.8"/><line x1="702.58" y1="172" x2="702.58" y2="175" stroke="#555" stroke-width="0.8"/><line x1="713.40" y1="170.3" x2="713.40" y2="175" stroke="#444" stroke-width="0.8"/><line x1="724.22" y1="172" x2="724.22" y2="175" stroke="#555" stroke-width="0.8"/><line x1="735.04" y1="172" x2="735.04" y2="175" stroke="#555" stroke-width="0.8"/><line x1="745.86" y1="172" x2="745.86" y2="175" stroke="#555" stroke-width="0.8"/><line x1="756.68" y1="172" x2="756.68" y2="175" stroke="#555" stroke-width="0.8"/><line x1="767.50" y1="165.5" x2="767.50" y2="175" stroke="#333" stroke-width="0.8"/><line x1="778.32" y1="172" x2="778.32" y2="175" stroke="#555" stroke-width="0.8"/><line x1="789.14" y1="172" x2="789.14" y2="175" stroke="#555" stroke-width="0.8"/><line x1="799.96" y1="172" x2="799.96" y2="175" stroke="#555" stroke-width="0.8"/><line x1="810.78" y1="172" x2="810.78" y2="175" stroke="#555" stroke-width="0.8"/><line x1="821.60" y1="170.3" x2="821.60" y2="175" stroke="#444" stroke-width="0.8"/><line x1="832.42" y1="172" x2="832.42" y2="175" stroke="#555" stroke-width="0.8"/><line x1="843.24" y1="172" x2="843.24" y2="175" stroke="#555" stroke-width="0.8"/><line x1="854.06" y1="172" x2="854.06" y2="175" stroke="#555" stroke-width="0.8"/><line x1="864.88" y1="172" x2="864.88" y2="175" stroke="#555" stroke-width="0.8"/><line x1="875.70" y1="165.5" x2="875.70" y2="175" stroke="#333" stroke-width="0.8"/><text x="227.30" y="170.8" font-size="5.3" fill="#333" font-family="Liberation Sans">0</text><text x="335.50" y="170.8" font-size="5.3" fill="#333" font-family="Liberation Sans">1000</text><text x="443.70" y="170.8" font-size="5.3" fill="#333" font-family="Liberation Sans">2000</text><text x="551.90" y="170.8" font-size="5.3" fill="#333" font-family="Liberation Sans">3000</text><text x="660.10" y="170.8" font-size="5.3" fill="#333" font-family="Liberation Sans">4000</text><text x="768.30" y="170.8" font-size="5.3" fill="#333" font-family="Liberation Sans">5000</text><text x="876.50" y="170.8" font-size="5.3" fill="#333" font-family="Liberation Sans">6000</text><path d="M301.6 165.8 H304.4 L303 168 Z" fill="#e00"/></svg><svg style="left:204px;top:175px;overflow:hidden" width="10" height="391" viewBox="204 175 10 391"><line x1="209.5" y1="560.10" x2="214" y2="560.10" stroke="#444" stroke-width="0.8"/><line x1="211.3" y1="549.28" x2="214" y2="549.28" stroke="#555" stroke-width="0.8"/><line x1="211.3" y1="538.46" x2="214" y2="538.46" stroke="#555" stroke-width="0.8"/><line x1="211.3" y1="527.64" x2="214" y2="527.64" stroke="#555" stroke-width="0.8"/><line x1="211.3" y1="516.82" x2="214" y2="516.82" stroke="#555" stroke-width="0.8"/><line x1="204.5" y1="506.00" x2="214" y2="506.00" stroke="#333" stroke-width="0.8"/><line x1="211.3" y1="495.18" x2="214" y2="495.18" stroke="#555" stroke-width="0.8"/><line x1="211.3" y1="484.36" x2="214" y2="484.36" stroke="#555" stroke-width="0.8"/><line x1="211.3" y1="473.54" x2="214" y2="473.54" stroke="#555" stroke-width="0.8"/><line x1="211.3" y1="462.72" x2="214" y2="462.72" stroke="#555" stroke-width="0.8"/><line x1="209.5" y1="451.90" x2="214" y2="451.90" stroke="#444" stroke-width="0.8"/><line x1="211.3" y1="441.08" x2="214" y2="441.08" stroke="#555" stroke-width="0.8"/><line x1="211.3" y1="430.26" x2="214" y2="430.26" stroke="#555" stroke-width="0.8"/><line x1="211.3" y1="419.44" x2="214" y2="419.44" stroke="#555" stroke-width="0.8"/><line x1="211.3" y1="408.62" x2="214" y2="408.62" stroke="#555" stroke-width="0.8"/><line x1="204.5" y1="397.80" x2="214" y2="397.80" stroke="#333" stroke-width="0.8"/><line x1="211.3" y1="386.98" x2="214" y2="386.98" stroke="#555" stroke-width="0.8"/><line x1="211.3" y1="376.16" x2="214" y2="376.16" stroke="#555" stroke-width="0.8"/><line x1="211.3" y1="365.34" x2="214" y2="365.34" stroke="#555" stroke-width="0.8"/><line x1="211.3" y1="354.52" x2="214" y2="354.52" stroke="#555" stroke-width="0.8"/><line x1="209.5" y1="343.70" x2="214" y2="343.70" stroke="#444" stroke-width="0.8"/><line x1="211.3" y1="332.88" x2="214" y2="332.88" stroke="#555" stroke-width="0.8"/><line x1="211.3" y1="322.06" x2="214" y2="322.06" stroke="#555" stroke-width="0.8"/><line x1="211.3" y1="311.24" x2="214" y2="311.24" stroke="#555" stroke-width="0.8"/><line x1="211.3" y1="300.42" x2="214" y2="300.42" stroke="#555" stroke-width="0.8"/><line x1="204.5" y1="289.60" x2="214" y2="289.60" stroke="#333" stroke-width="0.8"/><line x1="211.3" y1="278.78" x2="214" y2="278.78" stroke="#555" stroke-width="0.8"/><line x1="211.3" y1="267.96" x2="214" y2="267.96" stroke="#555" stroke-width="0.8"/><line x1="211.3" y1="257.14" x2="214" y2="257.14" stroke="#555" stroke-width="0.8"/><line x1="211.3" y1="246.32" x2="214" y2="246.32" stroke="#555" stroke-width="0.8"/><line x1="209.5" y1="235.50" x2="214" y2="235.50" stroke="#444" stroke-width="0.8"/><line x1="211.3" y1="224.68" x2="214" y2="224.68" stroke="#555" stroke-width="0.8"/><line x1="211.3" y1="213.86" x2="214" y2="213.86" stroke="#555" stroke-width="0.8"/><line x1="211.3" y1="203.04" x2="214" y2="203.04" stroke="#555" stroke-width="0.8"/><line x1="211.3" y1="192.22" x2="214" y2="192.22" stroke="#555" stroke-width="0.8"/><line x1="204.5" y1="181.40" x2="214" y2="181.40" stroke="#333" stroke-width="0.8"/><text transform="translate(209.6,505.20) rotate(-90)" font-size="5.3" fill="#333" font-family="Liberation Sans">0</text><text transform="translate(209.6,397.00) rotate(-90)" font-size="5.3" fill="#333" font-family="Liberation Sans">1000</text><text transform="translate(209.6,288.80) rotate(-90)" font-size="5.3" fill="#333" font-family="Liberation Sans">2000</text><text transform="translate(209.6,180.60) rotate(-90)" font-size="5.3" fill="#333" font-family="Liberation Sans">3000</text><path d="M204.6 201.4 V204.2 L206.8 202.8 Z" fill="#e00"/></svg>
<svg style="left:214px;top:175px" width="673" height="391" viewBox="214 175 673 391"><rect x="214" y="175" width="673" height="391" fill="#000"/><line x1="226.50" y1="175" x2="226.50" y2="566" stroke="#707070" stroke-width="0.75" stroke-dasharray="0.9 2.15"/><line x1="280.60" y1="175" x2="280.60" y2="566" stroke="#707070" stroke-width="0.75" stroke-dasharray="0.9 2.15"/><line x1="334.70" y1="175" x2="334.70" y2="566" stroke="#707070" stroke-width="0.75" stroke-dasharray="0.9 2.15"/><line x1="388.80" y1="175" x2="388.80" y2="566" stroke="#707070" stroke-width="0.75" stroke-dasharray="0.9 2.15"/><line x1="442.90" y1="175" x2="442.90" y2="566" stroke="#707070" stroke-width="0.75" stroke-dasharray="0.9 2.15"/><line x1="497.00" y1="175" x2="497.00" y2="566" stroke="#707070" stroke-width="0.75" stroke-dasharray="0.9 2.15"/><line x1="551.10" y1="175" x2="551.10" y2="566" stroke="#707070" stroke-width="0.75" stroke-dasharray="0.9 2.15"/><line x1="605.20" y1="175" x2="605.20" y2="566" stroke="#707070" stroke-width="0.75" stroke-dasharray="0.9 2.15"/><line x1="659.30" y1="175" x2="659.30" y2="566" stroke="#707070" stroke-width="0.75" stroke-dasharray="0.9 2.15"/><line x1="713.40" y1="175" x2="713.40" y2="566" stroke="#707070" stroke-width="0.75" stroke-dasharray="0.9 2.15"/><line x1="767.50" y1="175" x2="767.50" y2="566" stroke="#707070" stroke-width="0.75" stroke-dasharray="0.9 2.15"/><line x1="821.60" y1="175" x2="821.60" y2="566" stroke="#707070" stroke-width="0.75" stroke-dasharray="0.9 2.15"/><line x1="875.70" y1="175" x2="875.70" y2="566" stroke="#707070" stroke-width="0.75" stroke-dasharray="0.9 2.15"/><line x1="214" y1="560.10" x2="887" y2="560.10" stroke="#707070" stroke-width="0.75" stroke-dasharray="0.9 2.15"/><line x1="214" y1="506.00" x2="887" y2="506.00" stroke="#707070" stroke-width="0.75" stroke-dasharray="0.9 2.15"/><line x1="214" y1="451.90" x2="887" y2="451.90" stroke="#707070" stroke-width="0.75" stroke-dasharray="0.9 2.15"/><line x1="214" y1="397.80" x2="887" y2="397.80" stroke="#707070" stroke-width="0.75" stroke-dasharray="0.9 2.15"/><line x1="214" y1="343.70" x2="887" y2="343.70" stroke="#707070" stroke-width="0.75" stroke-dasharray="0.9 2.15"/><line x1="214" y1="289.60" x2="887" y2="289.60" stroke="#707070" stroke-width="0.75" stroke-dasharray="0.9 2.15"/><line x1="214" y1="235.50" x2="887" y2="235.50" stroke="#707070" stroke-width="0.75" stroke-dasharray="0.9 2.15"/><line x1="214" y1="181.40" x2="887" y2="181.40" stroke="#707070" stroke-width="0.75" stroke-dasharray="0.9 2.15"/><defs><pattern id="pp" patternUnits="userSpaceOnUse" width="3.6" height="4.2"><rect width="3.6" height="4.2" fill="#7b6c82"/><rect x="0" y="0" width="0.7" height="4.2" fill="#92559c"/><rect x="2" y="2.2" width="0.7" height="1.2" fill="#866090"/></pattern><g id="fr"><path d="M0,7 L8.5,7 L8.5,0 L44.5,0 L44.5,4 L49,4 L49,51 L44.5,51 L44.5,61.5 L37.5,61.5 L37.5,73.5 L27.5,73.5 L27.5,61.5 L18.5,61.5 L18.5,68.5 L8.5,68.5 L8.5,60 L0,60 Z M11.2,16.5 L43.7,16.5 L43.7,46.5 L27.5,46.5 L27.5,42.8 L7.2,42.8 L7.2,21.5 L11.2,21.5 Z M10,52 L23,52 L23,59.5 L10,59.5 Z M34.5,52.3 L43.3,52.3 L43.3,60.7 L34.5,60.7 Z" fill="url(#pp)" fill-rule="evenodd" stroke="#30f530" stroke-width="0.8"/><path d="M0,7 L8.5,7 L8.5,0 L44.5,0 L44.5,4 L49,4 L49,51 L44.5,51 L44.5,61.5 L37.5,61.5 L37.5,73.5 L27.5,73.5 L27.5,61.5 L18.5,61.5 L18.5,68.5 L8.5,68.5 L8.5,60 L0,60 Z M11.2,16.5 L43.7,16.5 L43.7,46.5 L27.5,46.5 L27.5,42.8 L7.2,42.8 L7.2,21.5 L11.2,21.5 Z" fill="none" stroke="#30f530" stroke-width="1.5" stroke-dasharray="0.9 3.7"/><circle cx="40.5" cy="6.5" r="2.6" fill="#000" stroke="#30f530" stroke-width="0.8"/><path d="M35.5,53.3 L42.3,59.8 M42.3,53.3 L35.5,59.8" stroke="#30f530" stroke-width="2.2"/><path d="M35.5,53.3 L42.3,59.8 M42.3,53.3 L35.5,59.8" stroke="#8a6090" stroke-width="1.3"/><circle cx="46.5" cy="21" r="1" fill="none" stroke="#30f530" stroke-width="0.7"/><circle cx="46.5" cy="27" r="1" fill="none" stroke="#30f530" stroke-width="0.7"/><circle cx="46.5" cy="33" r="1" fill="none" stroke="#30f530" stroke-width="0.7"/><circle cx="46.5" cy="39" r="1" fill="none" stroke="#30f530" stroke-width="0.7"/><path d="M2.5,23 H7.7" stroke="#30f530" stroke-width="0.7"/><path d="M2.5,36 H7.7" stroke="#30f530" stroke-width="0.7"/><circle cx="12" cy="5" r="1.2" fill="#000" stroke="#30f530" stroke-width="0.6"/><circle cx="17" cy="6" r="0.9" fill="#000" stroke="#30f530" stroke-width="0.6"/><circle cx="6" cy="12" r="1.1" fill="#000" stroke="#30f530" stroke-width="0.6"/><circle cx="11" cy="11" r="0.8" fill="#000" stroke="#30f530" stroke-width="0.6"/><circle cx="23" cy="9" r="0.9" fill="#000" stroke="#30f530" stroke-width="0.6"/><circle cx="29" cy="4" r="0.8" fill="#000" stroke="#30f530" stroke-width="0.6"/><circle cx="33" cy="12" r="1.1" fill="#000" stroke="#30f530" stroke-width="0.6"/><circle cx="38" cy="14" r="1" fill="#000" stroke="#30f530" stroke-width="0.6"/><circle cx="47" cy="13" r="1" fill="#000" stroke="#30f530" stroke-width="0.6"/><circle cx="15" cy="14" r="0.8" fill="#000" stroke="#30f530" stroke-width="0.6"/><circle cx="4" cy="48" r="1.2" fill="#000" stroke="#30f530" stroke-width="0.6"/><circle cx="20" cy="48.5" r="1" fill="#000" stroke="#30f530" stroke-width="0.6"/><circle cx="31" cy="49" r="1.1" fill="#000" stroke="#30f530" stroke-width="0.6"/><circle cx="40" cy="48" r="1.2" fill="#000" stroke="#30f530" stroke-width="0.6"/><circle cx="3" cy="55" r="1" fill="#000" stroke="#30f530" stroke-width="0.6"/><circle cx="26" cy="56" r="1" fill="#000" stroke="#30f530" stroke-width="0.6"/><circle cx="47" cy="7" r="0.9" fill="#000" stroke="#30f530" stroke-width="0.6"/><circle cx="22.3" cy="59.0" r="0.6" fill="#30f530"/><circle cx="41.2" cy="57.4" r="0.7" fill="#30f530"/><circle cx="38.3" cy="2.3" r="0.6" fill="#30f530"/><circle cx="42.8" cy="54.5" r="0.8" fill="#30f530"/><circle cx="31.7" cy="9.6" r="0.7" fill="#30f530"/><circle cx="4.0" cy="1.5" r="0.7" fill="#30f530"/><circle cx="16.3" cy="9.3" r="0.7" fill="#30f530"/><circle cx="24.5" cy="52.7" r="0.6" fill="#30f530"/><circle cx="26.9" cy="47.6" r="0.5" fill="#30f530"/><circle cx="11.8" cy="5.0" r="0.6" fill="#30f530"/><circle cx="40.8" cy="6.4" r="0.5" fill="#30f530"/><circle cx="44.6" cy="51.6" r="0.6" fill="#30f530"/><circle cx="27.6" cy="55.6" r="0.4" fill="#30f530"/><circle cx="16.6" cy="14.5" r="0.5" fill="#30f530"/><circle cx="34.2" cy="52.8" r="0.5" fill="#30f530"/><circle cx="27.3" cy="7.3" r="0.6" fill="#30f530"/><circle cx="19.0" cy="6.5" r="0.5" fill="#30f530"/><circle cx="46.6" cy="12.2" r="0.5" fill="#30f530"/><circle cx="19.5" cy="13.0" r="0.4" fill="#30f530"/><circle cx="7.9" cy="46.6" r="0.7" fill="#30f530"/><circle cx="19.1" cy="2.0" r="0.4" fill="#30f530"/><circle cx="18.3" cy="48.2" r="0.7" fill="#30f530"/><circle cx="7.4" cy="55.0" r="0.8" fill="#30f530"/><circle cx="39.4" cy="4.5" r="0.7" fill="#30f530"/><circle cx="19.2" cy="7.8" r="0.4" fill="#30f530"/><circle cx="2.8" cy="49.7" r="0.5" fill="#30f530"/><circle cx="39.7" cy="9.4" r="0.8" fill="#30f530"/><circle cx="46.9" cy="2.8" r="0.5" fill="#30f530"/><circle cx="44.1" cy="46.7" r="0.6" fill="#30f530"/><circle cx="12.7" cy="1.7" r="0.4" fill="#30f530"/><circle cx="3.5" cy="21.6" r="0.6" fill="#30f530"/><circle cx="4.8" cy="26.6" r="0.6" fill="#30f530"/><circle cx="5.8" cy="31.6" r="0.6" fill="#30f530"/><circle cx="5.7" cy="33.3" r="0.6" fill="#30f530"/><circle cx="3.1" cy="30.3" r="0.6" fill="#30f530"/><circle cx="1.7" cy="26.1" r="0.6" fill="#30f530"/><circle cx="1.8" cy="33.6" r="0.6" fill="#30f530"/><circle cx="2.9" cy="19.7" r="0.6" fill="#30f530"/></g><g id="gear"><rect x="-1.3" y="-1.6" width="2.6" height="3.2" rx="1.2" transform="translate(24.38,2.40) rotate(95.6)" fill="#177846" stroke="#30f530" stroke-width="0.85"/><rect x="-1.3" y="-1.6" width="2.6" height="3.2" rx="1.2" transform="translate(23.45,7.11) rotate(106.9)" fill="#177846" stroke="#30f530" stroke-width="0.85"/><rect x="-1.3" y="-1.6" width="2.6" height="3.2" rx="1.2" transform="translate(21.61,11.55) rotate(118.1)" fill="#177846" stroke="#30f530" stroke-width="0.85"/><rect x="-1.3" y="-1.6" width="2.6" height="3.2" rx="1.2" transform="translate(18.94,15.54) rotate(129.4)" fill="#177846" stroke="#30f530" stroke-width="0.85"/><rect x="-1.3" y="-1.6" width="2.6" height="3.2" rx="1.2" transform="translate(15.54,18.94) rotate(140.6)" fill="#177846" stroke="#30f530" stroke-width="0.85"/><rect x="-1.3" y="-1.6" width="2.6" height="3.2" rx="1.2" transform="translate(11.55,21.61) rotate(151.9)" fill="#177846" stroke="#30f530" stroke-width="0.85"/><rect x="-1.3" y="-1.6" width="2.6" height="3.2" rx="1.2" transform="translate(7.11,23.45) rotate(163.1)" fill="#177846" stroke="#30f530" stroke-width="0.85"/><rect x="-1.3" y="-1.6" width="2.6" height="3.2" rx="1.2" transform="translate(2.40,24.38) rotate(174.4)" fill="#177846" stroke="#30f530" stroke-width="0.85"/><rect x="-1.3" y="-1.6" width="2.6" height="3.2" rx="1.2" transform="translate(-2.40,24.38) rotate(185.6)" fill="#177846" stroke="#30f530" stroke-width="0.85"/><rect x="-1.3" y="-1.6" width="2.6" height="3.2" rx="1.2" transform="translate(-7.11,23.45) rotate(196.9)" fill="#177846" stroke="#30f530" stroke-width="0.85"/><rect x="-1.3" y="-1.6" width="2.6" height="3.2" rx="1.2" transform="translate(-11.55,21.61) rotate(208.1)" fill="#177846" stroke="#30f530" stroke-width="0.85"/><rect x="-1.3" y="-1.6" width="2.6" height="3.2" rx="1.2" transform="translate(-15.54,18.94) rotate(219.4)" fill="#177846" stroke="#30f530" stroke-width="0.85"/><rect x="-1.3" y="-1.6" width="2.6" height="3.2" rx="1.2" transform="translate(-18.94,15.54) rotate(230.6)" fill="#177846" stroke="#30f530" stroke-width="0.85"/><rect x="-1.3" y="-1.6" width="2.6" height="3.2" rx="1.2" transform="translate(-21.61,11.55) rotate(241.9)" fill="#177846" stroke="#30f530" stroke-width="0.85"/><rect x="-1.3" y="-1.6" width="2.6" height="3.2" rx="1.2" transform="translate(-23.45,7.11) rotate(253.1)" fill="#177846" stroke="#30f530" stroke-width="0.85"/><rect x="-1.3" y="-1.6" width="2.6" height="3.2" rx="1.2" transform="translate(-24.38,2.40) rotate(264.4)" fill="#177846" stroke="#30f530" stroke-width="0.85"/><rect x="-1.3" y="-1.6" width="2.6" height="3.2" rx="1.2" transform="translate(-24.38,-2.40) rotate(275.6)" fill="#177846" stroke="#30f530" stroke-width="0.85"/><rect x="-1.3" y="-1.6" width="2.6" height="3.2" rx="1.2" transform="translate(-23.45,-7.11) rotate(286.9)" fill="#177846" stroke="#30f530" stroke-width="0.85"/><rect x="-1.3" y="-1.6" width="2.6" height="3.2" rx="1.2" transform="translate(-21.61,-11.55) rotate(298.1)" fill="#177846" stroke="#30f530" stroke-width="0.85"/><rect x="-1.3" y="-1.6" width="2.6" height="3.2" rx="1.2" transform="translate(-18.94,-15.54) rotate(309.4)" fill="#177846" stroke="#30f530" stroke-width="0.85"/><rect x="-1.3" y="-1.6" width="2.6" height="3.2" rx="1.2" transform="translate(-15.54,-18.94) rotate(320.6)" fill="#177846" stroke="#30f530" stroke-width="0.85"/><rect x="-1.3" y="-1.6" width="2.6" height="3.2" rx="1.2" transform="translate(-11.55,-21.61) rotate(331.9)" fill="#177846" stroke="#30f530" stroke-width="0.85"/><rect x="-1.3" y="-1.6" width="2.6" height="3.2" rx="1.2" transform="translate(-7.11,-23.45) rotate(343.1)" fill="#177846" stroke="#30f530" stroke-width="0.85"/><rect x="-1.3" y="-1.6" width="2.6" height="3.2" rx="1.2" transform="translate(-2.40,-24.38) rotate(354.4)" fill="#177846" stroke="#30f530" stroke-width="0.85"/><rect x="-1.3" y="-1.6" width="2.6" height="3.2" rx="1.2" transform="translate(2.40,-24.38) rotate(365.6)" fill="#177846" stroke="#30f530" stroke-width="0.85"/><rect x="-1.3" y="-1.6" width="2.6" height="3.2" rx="1.2" transform="translate(7.11,-23.45) rotate(376.9)" fill="#177846" stroke="#30f530" stroke-width="0.85"/><rect x="-1.3" y="-1.6" width="2.6" height="3.2" rx="1.2" transform="translate(11.55,-21.61) rotate(388.1)" fill="#177846" stroke="#30f530" stroke-width="0.85"/><rect x="-1.3" y="-1.6" width="2.6" height="3.2" rx="1.2" transform="translate(15.54,-18.94) rotate(399.4)" fill="#177846" stroke="#30f530" stroke-width="0.85"/><rect x="-1.3" y="-1.6" width="2.6" height="3.2" rx="1.2" transform="translate(18.94,-15.54) rotate(410.6)" fill="#177846" stroke="#30f530" stroke-width="0.85"/><rect x="-1.3" y="-1.6" width="2.6" height="3.2" rx="1.2" transform="translate(21.61,-11.55) rotate(421.9)" fill="#177846" stroke="#30f530" stroke-width="0.85"/><rect x="-1.3" y="-1.6" width="2.6" height="3.2" rx="1.2" transform="translate(23.45,-7.11) rotate(433.1)" fill="#177846" stroke="#30f530" stroke-width="0.85"/><rect x="-1.3" y="-1.6" width="2.6" height="3.2" rx="1.2" transform="translate(24.38,-2.40) rotate(444.4)" fill="#177846" stroke="#30f530" stroke-width="0.85"/><path d="M23.3,0 A23.3,23.3 0 1 0 -23.3,0 A23.3,23.3 0 1 0 23.3,0 Z M13.50,0.00 L11.22,1.36 L13.11,3.23 L10.57,4.01 L11.95,6.27 L9.30,6.42 L10.10,8.95 L7.49,8.46 L7.67,11.11 L5.25,10.01 L4.79,12.62 L2.70,10.97 L1.63,13.40 L-0.00,11.30 L-1.63,13.40 L-2.70,10.97 L-4.79,12.62 L-5.25,10.01 L-7.67,11.11 L-7.49,8.46 L-10.10,8.95 L-9.30,6.42 L-11.95,6.27 L-10.57,4.01 L-13.11,3.23 L-11.22,1.36 L-13.50,-0.00 L-11.22,-1.36 L-13.11,-3.23 L-10.57,-4.01 L-11.95,-6.27 L-9.30,-6.42 L-10.10,-8.95 L-7.49,-8.46 L-7.67,-11.11 L-5.25,-10.01 L-4.79,-12.62 L-2.70,-10.97 L-1.63,-13.40 L-0.00,-11.30 L1.63,-13.40 L2.70,-10.97 L4.79,-12.62 L5.25,-10.01 L7.67,-11.11 L7.49,-8.46 L10.10,-8.95 L9.30,-6.42 L11.95,-6.27 L10.57,-4.01 L13.11,-3.23 L11.22,-1.36 Z" fill="#177846" fill-rule="evenodd" stroke="#30f530" stroke-width="0.9"/><rect x="-3.3" y="-1.65" width="6.6" height="3.3" rx="1.65" transform="translate(17.73,1.55) rotate(95.0)" fill="#000" stroke="#30f530" stroke-width="0.8"/><rect x="-3.3" y="-1.65" width="6.6" height="3.3" rx="1.65" transform="translate(7.52,16.13) rotate(155.0)" fill="#000" stroke="#30f530" stroke-width="0.8"/><rect x="-3.3" y="-1.65" width="6.6" height="3.3" rx="1.65" transform="translate(-10.21,14.58) rotate(215.0)" fill="#000" stroke="#30f530" stroke-width="0.8"/><rect x="-3.3" y="-1.65" width="6.6" height="3.3" rx="1.65" transform="translate(-17.73,-1.55) rotate(275.0)" fill="#000" stroke="#30f530" stroke-width="0.8"/><rect x="-3.3" y="-1.65" width="6.6" height="3.3" rx="1.65" transform="translate(-7.52,-16.13) rotate(335.0)" fill="#000" stroke="#30f530" stroke-width="0.8"/><rect x="-3.3" y="-1.65" width="6.6" height="3.3" rx="1.65" transform="translate(10.21,-14.58) rotate(395.0)" fill="#000" stroke="#30f530" stroke-width="0.8"/></g><g id="disc"><path d="M26.60,0.00 L26.23,2.06 L25.28,4.00 L24.21,5.81 L23.40,7.60 L23.00,9.53 L22.81,11.62 L22.43,13.75 L21.52,15.64 L20.00,17.09 L18.10,18.10 L16.17,18.93 L14.46,19.90 L13.01,21.22 L11.62,22.81 L10.07,24.30 L8.22,25.30 L6.14,25.58 L4.00,25.28 L1.95,24.82 L0.00,24.60 L-1.95,24.82 L-4.00,25.28 L-6.14,25.58 L-8.22,25.30 L-10.07,24.30 L-11.62,22.81 L-13.01,21.22 L-14.46,19.90 L-16.17,18.93 L-18.10,18.10 L-20.00,17.09 L-21.52,15.64 L-22.43,13.75 L-22.81,11.62 L-23.00,9.53 L-23.40,7.60 L-24.21,5.81 L-25.28,4.00 L-26.23,2.06 L-26.60,0.00 L-26.23,-2.06 L-25.28,-4.00 L-24.21,-5.81 L-23.40,-7.60 L-23.00,-9.53 L-22.81,-11.62 L-22.43,-13.75 L-21.52,-15.64 L-20.00,-17.09 L-18.10,-18.10 L-16.17,-18.93 L-14.46,-19.90 L-13.01,-21.22 L-11.62,-22.81 L-10.07,-24.30 L-8.22,-25.30 L-6.14,-25.58 L-4.00,-25.28 L-1.95,-24.82 L-0.00,-24.60 L1.95,-24.82 L4.00,-25.28 L6.14,-25.58 L8.22,-25.30 L10.07,-24.30 L11.62,-22.81 L13.01,-21.22 L14.46,-19.90 L16.17,-18.93 L18.10,-18.10 L20.00,-17.09 L21.52,-15.64 L22.43,-13.75 L22.81,-11.62 L23.00,-9.53 L23.40,-7.60 L24.21,-5.81 L25.28,-4.00 L26.23,-2.06 Z M20.80,-0.00 L20.56,-1.62 L19.95,-3.16 L19.23,-4.62 L18.64,-6.06 L18.27,-7.57 L18.00,-9.17 L17.59,-10.78 L16.83,-12.23 L15.68,-13.39 L14.28,-14.28 L12.84,-15.04 L11.52,-15.86 L10.33,-16.86 L9.17,-18.00 L7.89,-19.05 L6.43,-19.78 L4.81,-20.05 L3.16,-19.95 L1.55,-19.71 L0.00,-19.60 L-1.55,-19.71 L-3.16,-19.95 L-4.81,-20.05 L-6.43,-19.78 L-7.89,-19.05 L-9.17,-18.00 L-10.33,-16.86 L-11.52,-15.86 L-12.84,-15.04 L-14.28,-14.28 L-15.68,-13.39 L-16.83,-12.23 L-17.59,-10.78 L-18.00,-9.17 L-18.27,-7.57 L-18.64,-6.06 L-19.23,-4.62 L-19.95,-3.16 L-20.56,-1.62 L-20.80,-0.00 L-20.56,1.62 L-19.95,3.16 L-19.23,4.62 L-18.64,6.06 L-18.27,7.57 L-18.00,9.17 L-17.59,10.78 L-16.83,12.23 L-15.68,13.39 L-14.28,14.28 L-12.84,15.04 L-11.52,15.86 L-10.33,16.86 L-9.17,18.00 L-7.89,19.05 L-6.43,19.78 L-4.81,20.05 L-3.16,19.95 L-1.55,19.71 L-0.00,19.60 L1.55,19.71 L3.16,19.95 L4.81,20.05 L6.43,19.78 L7.89,19.05 L9.17,18.00 L10.33,16.86 L11.52,15.86 L12.84,15.04 L14.28,14.28 L15.68,13.39 L16.83,12.23 L17.59,10.78 L18.00,9.17 L18.27,7.57 L18.64,6.06 L19.23,4.62 L19.95,3.16 L20.56,1.62 Z" fill="#8a4a9a" fill-rule="evenodd" stroke="#30f530" stroke-width="0.8"/><path d="M8.6,0 A8.6,8.6 0 1 0 -8.6,0 A8.6,8.6 0 1 0 8.6,0 Z M3.70,0.00 L3.68,0.39 L3.62,0.77 L4.76,1.55 L4.57,2.03 L4.33,2.50 L4.05,2.94 L3.72,3.35 L3.35,3.72 L2.94,4.05 L1.85,3.20 L1.50,3.38 L1.14,3.52 L1.04,4.89 L0.52,4.97 L0.00,5.00 L-0.52,4.97 L-1.04,4.89 L-1.55,4.76 L-2.03,4.57 L-1.85,3.20 L-2.17,2.99 L-2.48,2.75 L-3.72,3.35 L-4.05,2.94 L-4.33,2.50 L-4.57,2.03 L-4.76,1.55 L-4.89,1.04 L-4.97,0.52 L-3.70,0.00 L-3.68,-0.39 L-3.62,-0.77 L-4.76,-1.55 L-4.57,-2.03 L-4.33,-2.50 L-4.05,-2.94 L-3.72,-3.35 L-3.35,-3.72 L-2.94,-4.05 L-1.85,-3.20 L-1.50,-3.38 L-1.14,-3.52 L-1.04,-4.89 L-0.52,-4.97 L-0.00,-5.00 L0.52,-4.97 L1.04,-4.89 L1.55,-4.76 L2.03,-4.57 L1.85,-3.20 L2.17,-2.99 L2.48,-2.75 L3.72,-3.35 L4.05,-2.94 L4.33,-2.50 L4.57,-2.03 L4.76,-1.55 L4.89,-1.04 L4.97,-0.52 Z" fill="#8a4a9a" fill-rule="evenodd" stroke="#30f530" stroke-width="0.7"/><path d="M7.05,2.57 L8.35,2.16 L9.63,1.53 L10.85,0.67 L11.99,-0.41 L13.01,-1.70 L13.89,-3.19 L14.59,-4.86 L15.08,-6.69 L15.35,-8.66 L15.38,-10.73 L15.14,-12.88 L14.62,-15.08" fill="none" stroke="#30f530" stroke-width="2.5" stroke-linecap="round"/><path d="M7.05,2.57 L8.35,2.16 L9.63,1.53 L10.85,0.67 L11.99,-0.41 L13.01,-1.70 L13.89,-3.19 L14.59,-4.86 L15.08,-6.69 L15.35,-8.66 L15.38,-10.73 L15.14,-12.88 L14.62,-15.08" fill="none" stroke="#8a4a9a" stroke-width="1.2" stroke-linecap="round"/><path d="M1.30,7.39 L2.30,8.31 L3.49,9.10 L4.85,9.73 L6.35,10.18 L7.98,10.42 L9.71,10.43 L11.50,10.20 L13.34,9.72 L15.17,8.97 L16.98,7.95 L18.72,6.67 L20.37,5.12" fill="none" stroke="#30f530" stroke-width="2.5" stroke-linecap="round"/><path d="M1.30,7.39 L2.30,8.31 L3.49,9.10 L4.85,9.73 L6.35,10.18 L7.98,10.42 L9.71,10.43 L11.50,10.20 L13.34,9.72 L15.17,8.97 L16.98,7.95 L18.72,6.67 L20.37,5.12" fill="none" stroke="#8a4a9a" stroke-width="1.2" stroke-linecap="round"/><path d="M-5.75,4.82 L-6.05,6.15 L-6.14,7.58 L-6.01,9.07 L-5.64,10.59 L-5.03,12.12 L-4.18,13.62 L-3.08,15.06 L-1.75,16.41 L-0.18,17.62 L1.60,18.68 L3.59,19.55 L5.75,20.20" fill="none" stroke="#30f530" stroke-width="2.5" stroke-linecap="round"/><path d="M-5.75,4.82 L-6.05,6.15 L-6.14,7.58 L-6.01,9.07 L-5.64,10.59 L-5.03,12.12 L-4.18,13.62 L-3.08,15.06 L-1.75,16.41 L-0.18,17.62 L1.60,18.68 L3.59,19.55 L5.75,20.20" fill="none" stroke="#8a4a9a" stroke-width="1.2" stroke-linecap="round"/><path d="M-7.05,-2.57 L-8.35,-2.16 L-9.63,-1.53 L-10.85,-0.67 L-11.99,0.41 L-13.01,1.70 L-13.89,3.19 L-14.59,4.86 L-15.08,6.69 L-15.35,8.66 L-15.38,10.73 L-15.14,12.88 L-14.62,15.08" fill="none" stroke="#30f530" stroke-width="2.5" stroke-linecap="round"/><path d="M-7.05,-2.57 L-8.35,-2.16 L-9.63,-1.53 L-10.85,-0.67 L-11.99,0.41 L-13.01,1.70 L-13.89,3.19 L-14.59,4.86 L-15.08,6.69 L-15.35,8.66 L-15.38,10.73 L-15.14,12.88 L-14.62,15.08" fill="none" stroke="#8a4a9a" stroke-width="1.2" stroke-linecap="round"/><path d="M-1.30,-7.39 L-2.30,-8.31 L-3.49,-9.10 L-4.85,-9.73 L-6.35,-10.18 L-7.98,-10.42 L-9.71,-10.43 L-11.50,-10.20 L-13.34,-9.72 L-15.17,-8.97 L-16.98,-7.95 L-18.72,-6.67 L-20.37,-5.12" fill="none" stroke="#30f530" stroke-width="2.5" stroke-linecap="round"/><path d="M-1.30,-7.39 L-2.30,-8.31 L-3.49,-9.10 L-4.85,-9.73 L-6.35,-10.18 L-7.98,-10.42 L-9.71,-10.43 L-11.50,-10.20 L-13.34,-9.72 L-15.17,-8.97 L-16.98,-7.95 L-18.72,-6.67 L-20.37,-5.12" fill="none" stroke="#8a4a9a" stroke-width="1.2" stroke-linecap="round"/><path d="M5.75,-4.82 L6.05,-6.15 L6.14,-7.58 L6.01,-9.07 L5.64,-10.59 L5.03,-12.12 L4.18,-13.62 L3.08,-15.06 L1.75,-16.41 L0.18,-17.62 L-1.60,-18.68 L-3.59,-19.55 L-5.75,-20.20" fill="none" stroke="#30f530" stroke-width="2.5" stroke-linecap="round"/><path d="M5.75,-4.82 L6.05,-6.15 L6.14,-7.58 L6.01,-9.07 L5.64,-10.59 L5.03,-12.12 L4.18,-13.62 L3.08,-15.06 L1.75,-16.41 L0.18,-17.62 L-1.60,-18.68 L-3.59,-19.55 L-5.75,-20.20" fill="none" stroke="#8a4a9a" stroke-width="1.2" stroke-linecap="round"/><circle cx="23.00" cy="0.00" r="1.0" fill="#000" stroke="#30f530" stroke-width="0.5"/><circle cx="22.50" cy="4.78" r="1.0" fill="#000" stroke="#30f530" stroke-width="0.5"/><circle cx="21.01" cy="9.35" r="1.0" fill="#000" stroke="#30f530" stroke-width="0.5"/><circle cx="18.61" cy="13.52" r="1.0" fill="#000" stroke="#30f530" stroke-width="0.5"/><circle cx="15.39" cy="17.09" r="1.0" fill="#000" stroke="#30f530" stroke-width="0.5"/><circle cx="11.50" cy="19.92" r="1.0" fill="#000" stroke="#30f530" stroke-width="0.5"/><circle cx="7.11" cy="21.87" r="1.0" fill="#000" stroke="#30f530" stroke-width="0.5"/><circle cx="2.40" cy="22.87" r="1.0" fill="#000" stroke="#30f530" stroke-width="0.5"/><circle cx="-2.40" cy="22.87" r="1.0" fill="#000" stroke="#30f530" stroke-width="0.5"/><circle cx="-7.11" cy="21.87" r="1.0" fill="#000" stroke="#30f530" stroke-width="0.5"/><circle cx="-11.50" cy="19.92" r="1.0" fill="#000" stroke="#30f530" stroke-width="0.5"/><circle cx="-15.39" cy="17.09" r="1.0" fill="#000" stroke="#30f530" stroke-width="0.5"/><circle cx="-18.61" cy="13.52" r="1.0" fill="#000" stroke="#30f530" stroke-width="0.5"/><circle cx="-21.01" cy="9.35" r="1.0" fill="#000" stroke="#30f530" stroke-width="0.5"/><circle cx="-22.50" cy="4.78" r="1.0" fill="#000" stroke="#30f530" stroke-width="0.5"/><circle cx="-23.00" cy="0.00" r="1.0" fill="#000" stroke="#30f530" stroke-width="0.5"/><circle cx="-22.50" cy="-4.78" r="1.0" fill="#000" stroke="#30f530" stroke-width="0.5"/><circle cx="-21.01" cy="-9.35" r="1.0" fill="#000" stroke="#30f530" stroke-width="0.5"/><circle cx="-18.61" cy="-13.52" r="1.0" fill="#000" stroke="#30f530" stroke-width="0.5"/><circle cx="-15.39" cy="-17.09" r="1.0" fill="#000" stroke="#30f530" stroke-width="0.5"/><circle cx="-11.50" cy="-19.92" r="1.0" fill="#000" stroke="#30f530" stroke-width="0.5"/><circle cx="-7.11" cy="-21.87" r="1.0" fill="#000" stroke="#30f530" stroke-width="0.5"/><circle cx="-2.40" cy="-22.87" r="1.0" fill="#000" stroke="#30f530" stroke-width="0.5"/><circle cx="2.40" cy="-22.87" r="1.0" fill="#000" stroke="#30f530" stroke-width="0.5"/><circle cx="7.11" cy="-21.87" r="1.0" fill="#000" stroke="#30f530" stroke-width="0.5"/><circle cx="11.50" cy="-19.92" r="1.0" fill="#000" stroke="#30f530" stroke-width="0.5"/><circle cx="15.39" cy="-17.09" r="1.0" fill="#000" stroke="#30f530" stroke-width="0.5"/><circle cx="18.61" cy="-13.52" r="1.0" fill="#000" stroke="#30f530" stroke-width="0.5"/><circle cx="21.01" cy="-9.35" r="1.0" fill="#000" stroke="#30f530" stroke-width="0.5"/><circle cx="22.50" cy="-4.78" r="1.0" fill="#000" stroke="#30f530" stroke-width="0.5"/><circle cx="5.89" cy="3.40" r="0.8" fill="#000" stroke="#30f530" stroke-width="0.4"/><circle cx="0.00" cy="6.80" r="0.8" fill="#000" stroke="#30f530" stroke-width="0.4"/><circle cx="-5.89" cy="3.40" r="0.8" fill="#000" stroke="#30f530" stroke-width="0.4"/><circle cx="-5.89" cy="-3.40" r="0.8" fill="#000" stroke="#30f530" stroke-width="0.4"/><circle cx="-0.00" cy="-6.80" r="0.8" fill="#000" stroke="#30f530" stroke-width="0.4"/><circle cx="5.89" cy="-3.40" r="0.8" fill="#000" stroke="#30f530" stroke-width="0.4"/></g></defs><rect x="226.50" y="235.50" width="649.20" height="270.50" fill="none" stroke="#fafafa" stroke-width="1.7"/><use href="#fr" transform="translate(228.50,239.5)"/><use href="#fr" transform="translate(276.10,371) rotate(180)"/><use href="#fr" transform="translate(228.50,373.6)"/><use href="#fr" transform="translate(276.10,504.3) rotate(180)"/><use href="#fr" transform="translate(280.60,239.5)"/><use href="#fr" transform="translate(328.20,371) rotate(180)"/><use href="#fr" transform="translate(280.60,373.6)"/><use href="#fr" transform="translate(328.20,504.3) rotate(180)"/><use href="#fr" transform="translate(332.70,239.5)"/><use href="#fr" transform="translate(380.30,371) rotate(180)"/><use href="#fr" transform="translate(332.70,373.6)"/><use href="#fr" transform="translate(380.30,504.3) rotate(180)"/><use href="#fr" transform="translate(384.80,239.5)"/><use href="#fr" transform="translate(432.40,371) rotate(180)"/><use href="#fr" transform="translate(384.80,373.6)"/><use href="#fr" transform="translate(432.40,504.3) rotate(180)"/><use href="#fr" transform="translate(436.90,239.5)"/><use href="#fr" transform="translate(484.50,371) rotate(180)"/><use href="#fr" transform="translate(436.90,373.6)"/><use href="#fr" transform="translate(484.50,504.3) rotate(180)"/><use href="#fr" transform="translate(489.00,239.5)"/><use href="#fr" transform="translate(536.60,371) rotate(180)"/><use href="#fr" transform="translate(489.00,373.6)"/><use href="#fr" transform="translate(536.60,504.3) rotate(180)"/><use href="#fr" transform="translate(541.10,239.5)"/><use href="#fr" transform="translate(588.70,371) rotate(180)"/><use href="#fr" transform="translate(541.10,373.6)"/><use href="#fr" transform="translate(588.70,504.3) rotate(180)"/><use href="#gear" transform="translate(617.40,263.80)"/><use href="#gear" transform="translate(671.90,263.80)"/><use href="#gear" transform="translate(726.40,263.80)"/><use href="#gear" transform="translate(780.90,263.80)"/><use href="#gear" transform="translate(835.40,263.80)"/><use href="#gear" transform="translate(617.40,317.90)"/><use href="#gear" transform="translate(671.90,317.90)"/><use href="#gear" transform="translate(726.40,317.90)"/><use href="#gear" transform="translate(780.90,317.90)"/><use href="#gear" transform="translate(835.40,317.90)"/><use href="#gear" transform="translate(617.40,372.00)"/><use href="#gear" transform="translate(671.90,372.00)"/><use href="#gear" transform="translate(726.40,372.00)"/><use href="#gear" transform="translate(780.90,372.00)"/><use href="#gear" transform="translate(835.40,372.00)"/><use href="#gear" transform="translate(617.40,426.10)"/><use href="#gear" transform="translate(671.90,426.10)"/><use href="#gear" transform="translate(726.40,426.10)"/><use href="#gear" transform="translate(780.90,426.10)"/><use href="#gear" transform="translate(835.40,426.10)"/><use href="#fr" transform="translate(590,503) rotate(-90) scale(1,1)"/><use href="#fr" transform="translate(723,454) rotate(90)"/><use href="#disc" transform="translate(749.5,478.9)"/><use href="#disc" transform="translate(801.8,478.9)"/><path d="M846.6,464.2 L853,463 L860,463.3 L866.5,465.5 L871.5,469.5 L873.4,474.5 L872,479.5 L868.5,483.5 L862,489 L855,494 L848,499 L842,502.5 L836.8,505 L832,501.5 L829,496.5 L828.4,491.2 L831.5,489 L838,489.3 L842.5,487 L844.6,481 L846.5,476.8 L848,474.8 L852,474.5 L856,475.5 L859.5,475.2 L856,471.5 L851,471.8 L849.2,469 Z" fill="none" stroke="#7cf050" stroke-width="1.3"/><path d="M846.6,464.2 L853,463 L860,463.3 L866.5,465.5 L871.5,469.5 L873.4,474.5 L872,479.5 L868.5,483.5 L862,489 L855,494 L848,499 L842,502.5 L836.8,505 L832,501.5 L829,496.5 L828.4,491.2 L831.5,489 L838,489.3 L842.5,487 L844.6,481 L846.5,476.8 L848,474.8 L852,474.5 L856,475.5 L859.5,475.2 L856,471.5 L851,471.8 L849.2,469 Z" fill="none" stroke="#c8dc3c" stroke-width="0.6"/><path d="M849,468.5 Q860,466.5 866.5,472 Q869.5,477.5 865.5,482.5 L857,490 L848,496.5 L840,501.5 M846,477.5 L853.5,481 L859,478.5 L865,474.5 M853.5,481 L851,489 L857,489.8 M838.5,489.5 L843,494 L849.5,494.5 M843,494 L840,501.5 M831,493.5 Q837,495.5 843,494 M856,472 L859,478.5 M844.6,481 L851,489" fill="none" stroke="#c8dc3c" stroke-width="0.75"/><path d="M849,468.5 Q860,466.5 866.5,472 Q869.5,477.5 865.5,482.5 M846,477.5 L853.5,481 L859,478.5 M838.5,489.5 L843,494 L849.5,494.5" fill="none" stroke="#7cf050" stroke-width="0.35"/><circle cx="850" cy="466" r="0.9" fill="#e86060"/><circle cx="856" cy="465.5" r="0.9" fill="#e86060"/><circle cx="863" cy="467.5" r="0.9" fill="#e86060"/><circle cx="869" cy="472" r="0.9" fill="#e86060"/><circle cx="870" cy="478" r="0.9" fill="#e86060"/><circle cx="866" cy="482" r="0.9" fill="#e86060"/><circle cx="860" cy="487" r="0.9" fill="#e86060"/><circle cx="853" cy="491" r="0.9" fill="#e86060"/><circle cx="846" cy="496" r="0.9" fill="#e86060"/><circle cx="839" cy="500" r="0.9" fill="#e86060"/><circle cx="834" cy="497" r="0.9" fill="#e86060"/><circle cx="831" cy="492" r="0.9" fill="#e86060"/><circle cx="836" cy="490.5" r="0.9" fill="#e86060"/><circle cx="843" cy="484" r="0.9" fill="#e86060"/><circle cx="847" cy="478" r="0.9" fill="#e86060"/><circle cx="852" cy="476" r="0.9" fill="#e86060"/><circle cx="857" cy="476" r="0.9" fill="#e86060"/><circle cx="862" cy="470" r="0.9" fill="#e86060"/><circle cx="858" cy="481" r="0.9" fill="#e86060"/><circle cx="851" cy="488" r="0.9" fill="#e86060"/><circle cx="844" cy="493" r="0.9" fill="#e86060"/><circle cx="866" cy="476" r="0.9" fill="#e86060"/><text x="218.4" y="189" font-size="9" fill="#e8e8e8" stroke="#d0d0d0" stroke-width="0.2" font-family="Liberation Serif">底图-&gt;排样底图</text><text x="734.2" y="189" font-size="9" fill="#f0e600" stroke="#e0d800" stroke-width="0.15" font-family="Liberation Serif">板材:热轧板&#160; 厚度:<tspan font-family="Liberation Sans" font-weight="bold" font-size="8.6">10mm</tspan>&#160; 气体:氧气</text><path d="M292 202.8 H314 M303 192 V213.6" stroke="#a8a8a8" stroke-width="0.9"/><rect x="225.5" y="505" width="2" height="2" fill="#e00"/><path d="M228.6 519.5 V552 H261.3" fill="none" stroke="#c8c8c8" stroke-width="0.8"/><rect x="226.2" y="549.6" width="4.6" height="4.6" fill="none" stroke="#c8c8c8" stroke-width="0.7"/><text x="222" y="527" font-size="7" fill="#c8c8c8" font-family="Liberation Sans">Y</text><text x="255" y="560" font-size="7" fill="#c8c8c8" font-family="Liberation Sans">X</text></svg>
<div class="a" style="left:887px;top:165.5px;width:12px;height:401px;background:#fff"></div>
<svg style="left:889px;top:166.5px" width="9" height="9" viewBox="0 0 9 9"><path d="M1.5 0.5 H6 L8 2.5 V8.5 H1.5 Z" fill="#fff" stroke="#7f9be8" stroke-width="0.6"/><rect x="1.5" y="5.5" width="6.5" height="3" fill="#2a50e0"/></svg>
<svg style="left:889px;top:180.5px" width="9" height="9" viewBox="0 0 9 9"><rect x="0.5" y="0.5" width="8" height="8" fill="#b4b4b4"/></svg>
<svg style="left:889px;top:195.5px" width="9" height="9" viewBox="0 0 9 9"><rect x="0.5" y="0.5" width="8" height="8" fill="#c9c9c9"/></svg>
<svg style="left:889px;top:210.0px" width="9" height="9" viewBox="0 0 9 9"><rect x="0.5" y="0.5" width="8" height="8" fill="#e0e0e0"/></svg>
<svg style="left:889px;top:224.5px" width="9" height="9" viewBox="0 0 9 9"><rect x="0.5" y="0.5" width="8" height="8" fill="#c5c5c5"/></svg>
<svg style="left:889px;top:239.0px" width="9" height="9" viewBox="0 0 9 9"><rect x="0.5" y="0.5" width="8" height="8" fill="#e3e3e3"/></svg>
<svg style="left:889px;top:253.0px" width="9" height="9" viewBox="0 0 9 9"><rect x="0.6" y="1" width="7.8" height="6" rx="1" fill="#eef2ff" stroke="#8aa2ee" stroke-width="0.6"/><path d="M2.5 6 L6.5 2" stroke="#30b8ee" stroke-width="0.8"/></svg>
<div class="a" style="left:887.5px;top:264.0px;width:11.5px;height:17px;background:#c3d0f5"></div>
<svg style="left:889px;top:268.0px" width="9" height="9" viewBox="0 0 9 9"><rect x="0.6" y="1" width="7.8" height="6" rx="0.8" fill="#7fa8f5" stroke="#5a7ee8" stroke-width="0.6"/><rect x="3" y="2.5" width="3" height="3" fill="#3ad0f0"/></svg>
<svg style="left:889px;top:282.5px" width="9" height="9" viewBox="0 0 9 9"><rect x="0.6" y="1" width="7.8" height="6" rx="1" fill="#fff" stroke="#8aa2ee" stroke-width="0.6"/><circle cx="4.5" cy="4" r="1" fill="#e85a9a"/></svg>
<svg style="left:889px;top:297.0px" width="9" height="9" viewBox="0 0 9 9"><rect x="0.6" y="1" width="7.8" height="6.5" rx="1" fill="#eef2ff" stroke="#8aa2ee" stroke-width="0.6"/><path d="M2.5 6 L6.5 2.5" stroke="#7a5ae8" stroke-width="0.8"/></svg>
<svg style="left:889px;top:311.5px" width="9" height="9" viewBox="0 0 9 9"><circle cx="4.5" cy="4.5" r="3.8" fill="#fff" stroke="#8aa2ee" stroke-width="0.6"/><circle cx="4.5" cy="4.5" r="2" fill="#e8c83a"/></svg>
<svg style="left:889px;top:326.0px" width="9" height="9" viewBox="0 0 9 9"><path d="M1 4.5 L4.5 1 L8 4.5 V8.3 H1 Z" fill="#fff" stroke="#6a8ae8" stroke-width="0.6"/><rect x="3" y="5" width="3" height="3" fill="#3a5ae0"/></svg>
<div class="a" style="left:887.5px;top:336.5px;width:11.5px;height:17px;background:#c3d0f5"></div>
<svg style="left:889px;top:340.5px" width="9" height="9" viewBox="0 0 9 9"><rect x="0.6" y="1.5" width="7.8" height="6" rx="0.8" fill="#f8d0c8" stroke="#e86a4a" stroke-width="0.6"/><path d="M1.5 3.5 H7.5" stroke="#e86a4a" stroke-width="0.6"/></svg>
<svg style="left:889px;top:355.2px" width="9" height="9" viewBox="0 0 9 9"><rect x="0.6" y="1.5" width="7.8" height="6" rx="1" fill="#eef2ff" stroke="#8aa2ee" stroke-width="0.6"/><path d="M3 5 Q4.5 2 6.5 3" fill="none" stroke="#3a60e0" stroke-width="0.7"/></svg>
<svg style="left:889px;top:370.5px" width="9" height="9" viewBox="0 0 9 9"><rect x="0.6" y="1.5" width="7.8" height="6" rx="1" fill="#fff" stroke="#8aa2ee" stroke-width="0.6"/><rect x="4" y="3" width="1" height="3" fill="#c03060"/></svg>
<svg style="left:889px;top:384.0px" width="9" height="9" viewBox="0 0 9 9"><rect x="0.6" y="1.5" width="7.8" height="6" rx="1" fill="#fff" stroke="#8aa2ee" stroke-width="0.6"/><path d="M3.5 2.5 V6.5 M5.5 2.5 V6.5" stroke="#30c070" stroke-width="0.6"/></svg>
<svg style="left:889px;top:399.0px" width="9" height="9" viewBox="0 0 9 9"><rect x="0.6" y="1.5" width="7.8" height="6" fill="#fff" stroke="#8aa2ee" stroke-width="0.6"/><rect x="1" y="2" width="3" height="5" fill="#5a7ae8"/><rect x="5" y="3" width="3" height="3" fill="#f0b0c8"/></svg>
<svg style="left:889px;top:412.5px" width="9" height="9" viewBox="0 0 9 9"><path d="M1.5 1.5 L7.5 7.5 M7.5 1.5 L1.5 7.5" stroke="#666" stroke-width="0.8"/><path d="M0.5 8.5 H8.5" stroke="#ddd" stroke-width="0.5"/></svg>
<svg style="left:889px;top:427.5px" width="9" height="9" viewBox="0 0 9 9"><path d="M1 4.5 L3.5 7 L8 2" fill="none" stroke="#aaa" stroke-width="0.7"/><path d="M0.5 8.5 H8.5" stroke="#ddd" stroke-width="0.5"/></svg>
<div class="a" style="left:887.5px;top:438.1px;width:11.5px;height:17px;background:#c3d0f5"></div>
<svg style="left:889px;top:442.1px" width="9" height="9" viewBox="0 0 9 9"><rect x="0.2" y="0.2" width="8.6" height="8.6" fill="#4a70e0"/><g fill="#fff"><circle cx="2" cy="2.5" r="0.6"/><circle cx="4.5" cy="2.5" r="0.6"/><circle cx="7" cy="2.5" r="0.6"/><circle cx="2" cy="6.5" r="0.6"/><circle cx="4.5" cy="6.5" r="0.6"/></g><circle cx="7" cy="6.5" r="0.8" fill="#30e060"/></svg>
<div class="a" style="left:1px;top:566.5px;width:898px;height:11.8px;background:#0c1f66;border-bottom:0.8px solid #06145a"></div>
<div class="t" style="left:1.2px;top:569.20px;font-size:6.8px;color:#dfe3f0;font-family:Liberation Mono,monospace;transform:scaleX(0.685);transform-origin:0 50%">[709.957,2799.784]</div>
<div class="t" style="left:852px;top:569.60px;font-size:6px;color:#e6e9f4;letter-spacing:0.3px">版本:8.0.0.29</div>
</body></html>
